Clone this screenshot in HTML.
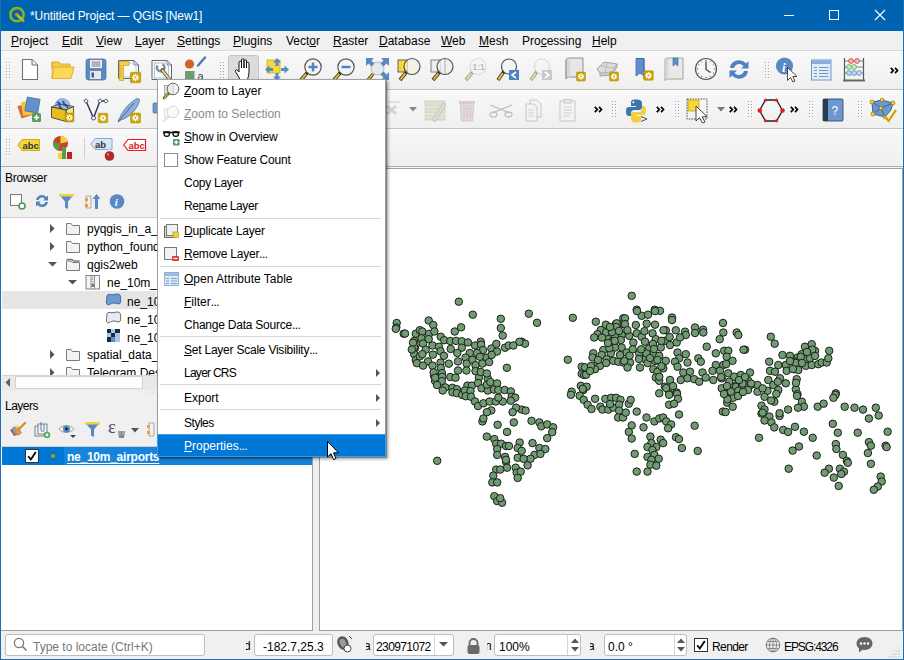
<!DOCTYPE html>
<html><head><meta charset="utf-8">
<style>
*{margin:0;padding:0;box-sizing:border-box}
html,body{width:904px;height:660px;overflow:hidden;background:#f0f0f0;font-family:"Liberation Sans",sans-serif;font-size:12px;color:#000}
.a{position:absolute}
svg{position:absolute;overflow:visible}
#title{left:0;top:0;width:904px;height:31px;background:#0063b1;color:#fff}
#menubar{left:1px;top:31px;width:902px;height:19px;background:#f0f0f0}
#menubar span{position:absolute;top:3px;font-size:12px}
.tb{left:1px;width:902px;background:linear-gradient(#f8f8f8,#efefef)}
.hline{height:1px;background:#c9c9c9}
.grip{position:absolute;width:3px;height:17px;background-image:radial-gradient(circle at 1px 1px,#b4b4b4 0.7px,transparent 0.9px);background-size:3px 3px}
.tx{position:absolute;white-space:nowrap}
u{text-decoration:underline;text-decoration-thickness:1px;text-underline-offset:0.8px}
.chev{position:absolute;font-weight:bold;font-size:13px;letter-spacing:-3px;transform:scaleY(0.9)}
.mi{position:absolute;left:184px;white-space:nowrap;font-size:12px}
.sep{position:absolute;left:160px;width:221px;height:1px;background:#d7d7d7}
.arr{position:absolute;left:376px;width:0;height:0;border-top:4px solid transparent;border-bottom:4px solid transparent;border-left:4px solid #555}
</style></head><body>

<!-- title bar -->
<div id="title" class="a">
  <svg style="left:8px;top:6px" width="20" height="20" viewBox="0 0 20 20">
    <circle cx="9" cy="8.6" r="6.6" fill="none" stroke="#8db21e" stroke-width="2.5"/>
    <line x1="9" y1="8.8" x2="15.2" y2="14.6" stroke="#8db21e" stroke-width="3" stroke-linecap="round"/>
    <line x1="9.5" y1="9.3" x2="14.5" y2="14" stroke="#a9cf4a" stroke-width="1.4" stroke-linecap="round"/>
    <circle cx="8.6" cy="8.4" r="1.6" fill="#f07a10"/>
  </svg>
  <div class="tx" style="left:30px;top:9px;font-size:12px;letter-spacing:-0.1px">*Untitled Project — QGIS [New1]</div>
  <div class="a" style="left:784px;top:15px;width:10px;height:1px;background:#fff"></div>
  <div class="a" style="left:829px;top:10px;width:10px;height:10px;border:1px solid #fff"></div>
  <svg style="left:875px;top:10px" width="10" height="10" viewBox="0 0 10 10"><path d="M0 0L10 10M10 0L0 10" stroke="#fff" stroke-width="1.1"/></svg>
</div>

<!-- menu bar -->
<div id="menubar" class="a">
  <span style="left:10px"><u>P</u>roject</span>
  <span style="left:61px"><u>E</u>dit</span>
  <span style="left:95px"><u>V</u>iew</span>
  <span style="left:134px"><u>L</u>ayer</span>
  <span style="left:176px"><u>S</u>ettings</span>
  <span style="left:232px"><u>P</u>lugins</span>
  <span style="left:285px">Vect<u>o</u>r</span>
  <span style="left:332px"><u>R</u>aster</span>
  <span style="left:378px"><u>D</u>atabase</span>
  <span style="left:440px"><u>W</u>eb</span>
  <span style="left:478px"><u>M</u>esh</span>
  <span style="left:521px">Pro<u>c</u>essing</span>
  <span style="left:591px"><u>H</u>elp</span>
</div>

<!-- toolbars -->
<div class="a hline" style="left:1px;top:50px;width:902px;background:#d8d8d8"></div>
<div class="a tb" style="top:51px;height:38px;border-top:1px solid #fcfcfc"></div>
<div class="a hline" style="left:1px;top:89px;width:902px;background:#c3c3c3"></div>
<div class="a tb" style="top:90px;height:38px;border-top:1px solid #fcfcfc"></div>
<div class="a hline" style="left:1px;top:128px;width:902px;background:#c3c3c3"></div>
<div class="a tb" style="top:129px;height:37px;border-top:1px solid #fcfcfc"></div>
<div class="a hline" style="left:1px;top:166px;width:902px;background:#ababab"></div>
<div class="a hline" style="left:1px;top:167px;width:902px;background:#f4f4f4"></div>

<!-- TOOLBAR ICONS -->
<svg style="left:6px;top:62px" width="6" height="18" viewBox="0 0 6 18" shape-rendering="crispEdges"><rect x="1" y="1" width="1" height="1" fill="#fff"/><rect x="0" y="0" width="1" height="1" fill="#a6a6a6"/><rect x="4" y="1" width="1" height="1" fill="#fff"/><rect x="3" y="0" width="1" height="1" fill="#a6a6a6"/><rect x="1" y="4" width="1" height="1" fill="#fff"/><rect x="0" y="3" width="1" height="1" fill="#a6a6a6"/><rect x="4" y="4" width="1" height="1" fill="#fff"/><rect x="3" y="3" width="1" height="1" fill="#a6a6a6"/><rect x="1" y="7" width="1" height="1" fill="#fff"/><rect x="0" y="6" width="1" height="1" fill="#a6a6a6"/><rect x="4" y="7" width="1" height="1" fill="#fff"/><rect x="3" y="6" width="1" height="1" fill="#a6a6a6"/><rect x="1" y="10" width="1" height="1" fill="#fff"/><rect x="0" y="9" width="1" height="1" fill="#a6a6a6"/><rect x="4" y="10" width="1" height="1" fill="#fff"/><rect x="3" y="9" width="1" height="1" fill="#a6a6a6"/><rect x="1" y="13" width="1" height="1" fill="#fff"/><rect x="0" y="12" width="1" height="1" fill="#a6a6a6"/><rect x="4" y="13" width="1" height="1" fill="#fff"/><rect x="3" y="12" width="1" height="1" fill="#a6a6a6"/><rect x="1" y="16" width="1" height="1" fill="#fff"/><rect x="0" y="15" width="1" height="1" fill="#a6a6a6"/><rect x="4" y="16" width="1" height="1" fill="#fff"/><rect x="3" y="15" width="1" height="1" fill="#a6a6a6"/></svg>
<svg style="left:21px;top:58px" width="18" height="23" viewBox="0 0 18 23" ><path d="M1.5 1.5H11L16.5 7V21.5H1.5Z" fill="#fff" stroke="#707070" stroke-width="1.1"/><path d="M11 1.5V7H16.5" fill="#eee" stroke="#707070" stroke-width="1"/></svg>
<svg style="left:51px;top:60px" width="24" height="20" viewBox="0 0 24 20" ><path d="M1 2H8L10 4H19V8H1Z" fill="#f1cc45" stroke="#d0a520" stroke-width="0.8"/><path d="M3 7H23L20 18.5H1Z" fill="#fdd853" stroke="#d0a520" stroke-width="0.8"/><path d="M1 2V18.5" stroke="#d0a520" stroke-width="0.8"/></svg>
<svg style="left:85px;top:58px" width="22" height="23" viewBox="0 0 22 23" ><rect x="1" y="1" width="20" height="21" rx="2.5" fill="#5b8ac2" stroke="#4a78b0" stroke-width="0.8"/><rect x="5" y="2" width="12" height="8" fill="#f4f4f4"/><path d="M6.5 4H15.5M6.5 6H15.5M6.5 8H15.5" stroke="#555" stroke-width="0.8"/><rect x="5" y="13" width="11" height="8" fill="#e8e8e8"/><rect x="6.5" y="14.5" width="2.5" height="5" fill="#3b5b8a"/></svg>
<svg style="left:117px;top:59px" width="25" height="24" viewBox="0 0 25 24" ><path d="M1.5 1.5H17L21.5 6V19.5H1.5Z" fill="#fafafa" stroke="#666" stroke-width="1"/><path d="M17 1.5V6H21.5" fill="none" stroke="#666" stroke-width="0.8"/><rect x="6" y="4" width="13" height="14" fill="none" stroke="#a6c4ee" stroke-width="0.8"/><path d="M2.5 2.5H12V6.5H6.5V21.5H2.5Z" fill="#f4cf45" stroke="#c9a21a" stroke-width="0.7"/><path d="M2.8 7H4.5M2.8 9.5H4.5M2.8 12H4.5M2.8 14.5H4.5M2.8 17H4.5" stroke="#b08a10" stroke-width="0.6"/><rect x="13.25" y="13.25" width="10.5" height="10.5" rx="1.2" fill="#c9a200" stroke="#b08d00" stroke-width="0.5"/><path d="M21.65 18.50L15.35 18.50M20.73 20.73L16.27 16.27M18.50 21.65L18.50 15.35M16.27 20.73L20.73 16.27" stroke="#fff" stroke-width="1.3" stroke-linecap="round"/><circle cx="18.5" cy="18.5" r="0.9" fill="#c9a200"/></svg>
<svg style="left:150px;top:59px" width="25" height="24" viewBox="0 0 25 24" ><path d="M2 1.5H17L21.5 6V20.5H2Z" fill="#fafafa" stroke="#666" stroke-width="1"/><path d="M17 1.5V6H21.5" fill="none" stroke="#666" stroke-width="0.8"/><rect x="4.5" y="4" width="14" height="15" fill="none" stroke="#a6c4ee" stroke-width="1"/><path d="M7.5 6.5A3.8 3.8 0 1 0 12.5 5.2" fill="none" stroke="#8a8a8a" stroke-width="2.4"/><path d="M8.8 5.5L10.5 7.5" stroke="#fafafa" stroke-width="1.6"/><line x1="12.2" y1="11" x2="20" y2="21" stroke="#444" stroke-width="3.6" stroke-linecap="round"/><line x1="12.4" y1="11.3" x2="19.8" y2="20.7" stroke="#efd57a" stroke-width="2" stroke-linecap="round"/></svg>
<svg style="left:183px;top:55px" width="24" height="27" viewBox="0 0 24 27" ><circle cx="6.5" cy="9" r="4.6" fill="#d1612a"/><line x1="15" y1="10.5" x2="22" y2="2.5" stroke="#4a78b8" stroke-width="2.4" stroke-linecap="round"/><rect x="2" y="16" width="9.5" height="9" fill="#6a9e6e"/><text x="14.5" y="25" font-family="Liberation Sans" font-size="11" fill="#444">a</text></svg>
<svg style="left:220px;top:62px" width="6" height="18" viewBox="0 0 6 18" shape-rendering="crispEdges"><rect x="1" y="1" width="1" height="1" fill="#fff"/><rect x="0" y="0" width="1" height="1" fill="#a6a6a6"/><rect x="4" y="1" width="1" height="1" fill="#fff"/><rect x="3" y="0" width="1" height="1" fill="#a6a6a6"/><rect x="1" y="4" width="1" height="1" fill="#fff"/><rect x="0" y="3" width="1" height="1" fill="#a6a6a6"/><rect x="4" y="4" width="1" height="1" fill="#fff"/><rect x="3" y="3" width="1" height="1" fill="#a6a6a6"/><rect x="1" y="7" width="1" height="1" fill="#fff"/><rect x="0" y="6" width="1" height="1" fill="#a6a6a6"/><rect x="4" y="7" width="1" height="1" fill="#fff"/><rect x="3" y="6" width="1" height="1" fill="#a6a6a6"/><rect x="1" y="10" width="1" height="1" fill="#fff"/><rect x="0" y="9" width="1" height="1" fill="#a6a6a6"/><rect x="4" y="10" width="1" height="1" fill="#fff"/><rect x="3" y="9" width="1" height="1" fill="#a6a6a6"/><rect x="1" y="13" width="1" height="1" fill="#fff"/><rect x="0" y="12" width="1" height="1" fill="#a6a6a6"/><rect x="4" y="13" width="1" height="1" fill="#fff"/><rect x="3" y="12" width="1" height="1" fill="#a6a6a6"/><rect x="1" y="16" width="1" height="1" fill="#fff"/><rect x="0" y="15" width="1" height="1" fill="#a6a6a6"/><rect x="4" y="16" width="1" height="1" fill="#fff"/><rect x="3" y="15" width="1" height="1" fill="#a6a6a6"/></svg>
<div class="a" style="left:228px;top:55px;width:31px;height:30px;background:#dcdcdc;border:1px solid #c4c4c4;border-radius:3px"></div>
<svg style="left:234px;top:57px" width="20" height="24" viewBox="0 0 20 24" ><path d="M5 13V5.5A1.25 1.25 0 0 1 7.5 5.5V11V3A1.25 1.25 0 0 1 10 3V11V4A1.25 1.25 0 0 1 12.5 4V11V6.5A1.25 1.25 0 0 1 15 6.5V15C15 18 14.2 20 13.5 22.5H6C5 20.5 3.5 18 1.6 14.8C0.9 13.4 2 12.2 3.2 13L5 15Z" fill="#fff" stroke="#111" stroke-width="1" stroke-linejoin="round"/></svg>
<svg style="left:265px;top:58px" width="24" height="23" viewBox="0 0 24 23" ><rect x="2" y="2" width="13" height="13" fill="#f7d83a" stroke="#d4ae10" stroke-width="0.8"/><g fill="#5a88c3"><path d="M12 0L16 4.5H13.5V8H10.5V4.5H8Z"/><path d="M12 23L16 18.5H13.5V15H10.5V18.5H8Z"/><path d="M0 11.5L4.5 7.5V10H8V13H4.5V15.5Z"/><path d="M24 11.5L19.5 7.5V10H16V13H19.5V15.5Z"/></g></svg>
<svg style="left:298px;top:57px" width="26" height="25" viewBox="0 0 26 25" ><g opacity="1"><line x1="3" y1="23" x2="9.096" y2="15.904" stroke="#3a3a3a" stroke-width="3.6" stroke-linecap="butt"/><line x1="3.5" y1="22.5" x2="8.796" y2="16.204" stroke="#f2c41a" stroke-width="1.9"/><circle cx="9.296" cy="15.704" r="1.7" fill="#111"/><circle cx="15" cy="10" r="8.2" fill="#f4f4f4" stroke="#555" stroke-width="1.2"/></g><path d="M15 5.5V14.5M10.5 10H19.5" stroke="#4f82c0" stroke-width="2.4"/></svg>
<svg style="left:331px;top:57px" width="26" height="25" viewBox="0 0 26 25" ><g opacity="1"><line x1="3" y1="23" x2="9.096" y2="15.904" stroke="#3a3a3a" stroke-width="3.6" stroke-linecap="butt"/><line x1="3.5" y1="22.5" x2="8.796" y2="16.204" stroke="#f2c41a" stroke-width="1.9"/><circle cx="9.296" cy="15.704" r="1.7" fill="#111"/><circle cx="15" cy="10" r="8.2" fill="#f4f4f4" stroke="#555" stroke-width="1.2"/></g><path d="M10.5 10H19.5" stroke="#4f82c0" stroke-width="2.4"/></svg>
<svg style="left:365px;top:57px" width="25" height="25" viewBox="0 0 25 25" ><circle cx="12.5" cy="11.5" r="6.5" fill="#e8e8e8" stroke="#aaa" stroke-width="0.8"/><line x1="3" y1="23" x2="8" y2="17" stroke="#222" stroke-width="3"/><line x1="3" y1="23" x2="7.7" y2="17.3" stroke="#f2c41a" stroke-width="1.6"/><g fill="#5a88c3"><path d="M1 1H9L6.5 3.5L9.5 6.5L6.5 9.5L3.5 6.5L1 9Z"/><path d="M24 1H16L18.5 3.5L15.5 6.5L18.5 9.5L21.5 6.5L24 9Z"/><path d="M24 23H16L18.5 20.5L15.5 17.5L18.5 14.5L21.5 17.5L24 15Z"/></g></svg>
<svg style="left:397px;top:57px" width="26" height="25" viewBox="0 0 26 25" ><rect x="1" y="3" width="9.5" height="12" fill="#f7d83a" stroke="#444" stroke-width="0.8"/><g opacity="1"><line x1="3" y1="23" x2="9.24" y2="15.26" stroke="#3a3a3a" stroke-width="3.6" stroke-linecap="butt"/><line x1="3.5" y1="22.5" x2="8.94" y2="15.56" stroke="#f2c41a" stroke-width="1.9"/><circle cx="9.44" cy="15.06" r="1.7" fill="#111"/><circle cx="15" cy="9.5" r="8" fill="rgba(245,240,220,0.75)" stroke="#555" stroke-width="1.2"/></g></svg>
<svg style="left:430px;top:57px" width="26" height="25" viewBox="0 0 26 25" ><rect x="1" y="3" width="9.5" height="12" fill="#eee" stroke="#666" stroke-width="0.8"/><g opacity="1"><line x1="3" y1="23" x2="9.24" y2="15.26" stroke="#3a3a3a" stroke-width="3.6" stroke-linecap="butt"/><line x1="3.5" y1="22.5" x2="8.94" y2="15.56" stroke="#f2c41a" stroke-width="1.9"/><circle cx="9.44" cy="15.06" r="1.7" fill="#111"/><circle cx="15" cy="9.5" r="8" fill="rgba(240,240,240,0.8)" stroke="#555" stroke-width="1.2"/></g><line x1="15" y1="2" x2="15" y2="17" stroke="#999" stroke-width="0.8"/></svg>
<svg style="left:463px;top:57px" width="26" height="25" viewBox="0 0 26 25" ><g opacity="0.45"><line x1="3" y1="23" x2="9.24" y2="15.26" stroke="#3a3a3a" stroke-width="3.6" stroke-linecap="butt"/><line x1="3.5" y1="22.5" x2="8.94" y2="15.56" stroke="#f2c41a" stroke-width="1.9"/><circle cx="9.44" cy="15.06" r="1.7" fill="#111"/><circle cx="15" cy="9.5" r="8" fill="#f6f6f6" stroke="#bbb" stroke-width="1.2"/></g><text x="9.5" y="13" font-family="Liberation Sans" font-size="8.5" font-weight="bold" fill="#bbb">1:1</text></svg>
<svg style="left:495px;top:57px" width="26" height="25" viewBox="0 0 26 25" ><g opacity="1"><line x1="3" y1="23" x2="8.600000000000001" y2="14.899999999999999" stroke="#3a3a3a" stroke-width="3.6" stroke-linecap="butt"/><line x1="3.5" y1="22.5" x2="8.3" y2="15.2" stroke="#f2c41a" stroke-width="1.9"/><circle cx="8.8" cy="14.7" r="1.7" fill="#111"/><circle cx="14" cy="9.5" r="7.5" fill="#f4f4f4" stroke="#555" stroke-width="1.2"/></g><rect x="14" y="13" width="10" height="10" fill="#4f82c0"/><path d="M21 15L17 18L21 21" fill="none" stroke="#fff" stroke-width="1.6"/></svg>
<svg style="left:528px;top:57px" width="26" height="25" viewBox="0 0 26 25" ><g opacity="0.45"><line x1="3" y1="23" x2="8.600000000000001" y2="14.899999999999999" stroke="#3a3a3a" stroke-width="3.6" stroke-linecap="butt"/><line x1="3.5" y1="22.5" x2="8.3" y2="15.2" stroke="#f2c41a" stroke-width="1.9"/><circle cx="8.8" cy="14.7" r="1.7" fill="#111"/><circle cx="14" cy="9.5" r="7.5" fill="#f6f6f6" stroke="#bbb" stroke-width="1.2"/></g><rect x="14" y="13" width="10" height="10" fill="#c9c9c9"/><path d="M17 15L21 18L17 21" fill="none" stroke="#fff" stroke-width="1.6"/></svg>
<svg style="left:562px;top:57px" width="26" height="25" viewBox="0 0 26 25" ><path d="M4 3C4 1.5 6 1 7 1H21V20H7C5.5 20 4 21 4 22Z" fill="#e6e6e6" stroke="#888" stroke-width="0.9"/><path d="M4 3V22" stroke="#999" stroke-width="0.9"/><rect x="5" y="3" width="3" height="17" fill="#d6d6d6"/><rect x="14.5" y="15.0" width="9" height="9" rx="1.2" fill="#c9a200" stroke="#b08d00" stroke-width="0.5"/><path d="M21.70 19.50L16.30 19.50M20.91 21.41L17.09 17.59M19.00 22.20L19.00 16.80M17.09 21.41L20.91 17.59" stroke="#fff" stroke-width="1.3" stroke-linecap="round"/><circle cx="19" cy="19.5" r="0.9" fill="#c9a200"/></svg>
<svg style="left:595px;top:57px" width="26" height="25" viewBox="0 0 26 25" ><path d="M2 12L9 5L22 7L17 15L5 16Z" fill="#dcdcdc" stroke="#999" stroke-width="0.9"/><path d="M5 16V19L17 18V15M17 18L22 10V7" fill="#c8c8c8" stroke="#999" stroke-width="0.8"/><path d="M6 9L19 11M12 6L10 15" stroke="#aaa" stroke-width="0.6"/><rect x="14.5" y="15.0" width="9" height="9" rx="1.2" fill="#c9a200" stroke="#b08d00" stroke-width="0.5"/><path d="M21.70 19.50L16.30 19.50M20.91 21.41L17.09 17.59M19.00 22.20L19.00 16.80M17.09 21.41L20.91 17.59" stroke="#fff" stroke-width="1.3" stroke-linecap="round"/><circle cx="19" cy="19.5" r="0.9" fill="#c9a200"/></svg>
<svg style="left:634px;top:57px" width="22" height="26" viewBox="0 0 22 26" ><path d="M2 1.5H10V19L6 16L2 19Z" fill="#5f8fca" stroke="#3f6aa3" stroke-width="0.8" transform="translate(0,0)"/><path d="M2 1.5H10V22" fill="none" stroke="#3f6aa3"/><rect x="9.75" y="13.75" width="9.5" height="9.5" rx="1.2" fill="#c9a200" stroke="#b08d00" stroke-width="0.5"/><path d="M17.35 18.50L11.65 18.50M16.52 20.52L12.48 16.48M14.50 21.35L14.50 15.65M12.48 20.52L16.52 16.48" stroke="#fff" stroke-width="1.3" stroke-linecap="round"/><circle cx="14.5" cy="18.5" r="0.9" fill="#c9a200"/></svg>
<svg style="left:662px;top:57px" width="23" height="25" viewBox="0 0 23 25" ><path d="M3 3C3 1.5 4.5 1 5.5 1H21V22H5.5C4.5 22 3 22.5 3 23.5Z" fill="#e9e9e9" stroke="#999" stroke-width="0.9"/><rect x="3.5" y="2" width="3" height="20" fill="#d8d8d8"/><path d="M11 1H16V9L13.5 7L11 9Z" fill="#5f8fca" stroke="#3f6aa3" stroke-width="0.6"/></svg>
<svg style="left:694px;top:57px" width="24" height="25" viewBox="0 0 24 25" ><circle cx="12" cy="12" r="10.5" fill="#f6f6f6" stroke="#555" stroke-width="1.2"/><path d="M12 4.5V12.5L16.5 15.5" fill="none" stroke="#444" stroke-width="1.3"/><g fill="#4f82c0"><circle cx="12" cy="3.5" r="0.8"/><circle cx="12" cy="20.5" r="0.8"/><circle cx="3.5" cy="12" r="0.8"/><circle cx="20.5" cy="12" r="0.8"/><circle cx="7.8" cy="4.6" r="0.6"/><circle cx="16.2" cy="4.6" r="0.6"/><circle cx="4.6" cy="7.8" r="0.6"/><circle cx="19.4" cy="7.8" r="0.6"/><circle cx="4.6" cy="16.2" r="0.6"/><circle cx="19.4" cy="16.2" r="0.6"/><circle cx="7.8" cy="19.4" r="0.6"/><circle cx="16.2" cy="19.4" r="0.6"/></g></svg>
<svg style="left:727px;top:58px" width="24" height="23" viewBox="0 0 24 23" ><path d="M3 10C3.5 5 8 2 12.5 2.3C15.5 2.5 17.5 4 19 5.5L21.5 3V10.5H14L16.5 8C15.5 7 14 6 12.3 6C9.5 6 7.5 8 7 10Z" fill="#4f82c0"/><path d="M21 13C20.5 18 16 21 11.5 20.7C8.5 20.5 6.5 19 5 17.5L2.5 20V12.5H10L7.5 15C8.5 16 10 17 11.7 17C14.5 17 16.5 15 17 13Z" fill="#4f82c0"/></svg>
<svg style="left:765px;top:62px" width="6" height="18" viewBox="0 0 6 18" shape-rendering="crispEdges"><rect x="1" y="1" width="1" height="1" fill="#fff"/><rect x="0" y="0" width="1" height="1" fill="#a6a6a6"/><rect x="4" y="1" width="1" height="1" fill="#fff"/><rect x="3" y="0" width="1" height="1" fill="#a6a6a6"/><rect x="1" y="4" width="1" height="1" fill="#fff"/><rect x="0" y="3" width="1" height="1" fill="#a6a6a6"/><rect x="4" y="4" width="1" height="1" fill="#fff"/><rect x="3" y="3" width="1" height="1" fill="#a6a6a6"/><rect x="1" y="7" width="1" height="1" fill="#fff"/><rect x="0" y="6" width="1" height="1" fill="#a6a6a6"/><rect x="4" y="7" width="1" height="1" fill="#fff"/><rect x="3" y="6" width="1" height="1" fill="#a6a6a6"/><rect x="1" y="10" width="1" height="1" fill="#fff"/><rect x="0" y="9" width="1" height="1" fill="#a6a6a6"/><rect x="4" y="10" width="1" height="1" fill="#fff"/><rect x="3" y="9" width="1" height="1" fill="#a6a6a6"/><rect x="1" y="13" width="1" height="1" fill="#fff"/><rect x="0" y="12" width="1" height="1" fill="#a6a6a6"/><rect x="4" y="13" width="1" height="1" fill="#fff"/><rect x="3" y="12" width="1" height="1" fill="#a6a6a6"/><rect x="1" y="16" width="1" height="1" fill="#fff"/><rect x="0" y="15" width="1" height="1" fill="#a6a6a6"/><rect x="4" y="16" width="1" height="1" fill="#fff"/><rect x="3" y="15" width="1" height="1" fill="#a6a6a6"/></svg>
<svg style="left:775px;top:56px" width="27" height="27" viewBox="0 0 27 27" ><circle cx="9.5" cy="10" r="8.6" fill="#5a8ac6"/><text x="7" y="15.5" font-family="Liberation Serif" font-style="italic" font-weight="bold" font-size="13" fill="#fff">i</text><path d="M12.5 11.5V24.5L15.5 21.5L18 26L20 25L17.8 20.5H22Z" fill="#fff" stroke="#333" stroke-width="0.9" stroke-linejoin="round"/></svg>
<svg style="left:810px;top:58px" width="23" height="24" viewBox="0 0 23 24" ><rect x="1.5" y="2" width="19.5" height="20" fill="#e3ecf7" stroke="#6b98d0" stroke-width="1"/><rect x="2" y="2.5" width="18.5" height="3.5" fill="#89acdb"/><path d="M4 9.5H7M9 9.5H18.5M4 12.5H7M9 12.5H18.5M4 15.5H7M9 15.5H18.5M4 18.5H7M9 18.5H18.5" stroke="#6b98d0" stroke-width="1.1"/></svg>
<svg style="left:842px;top:57px" width="24" height="26" viewBox="0 0 24 26" ><path d="M2.5 1V23M21.5 1V23" stroke="#555" stroke-width="1.2"/><path d="M1 23.5H23" stroke="#666" stroke-width="2"/><path d="M2.5 4H21.5M2.5 10H21.5M2.5 16H21.5" stroke="#666" stroke-width="0.8"/><g stroke-width="0.8"><circle cx="9" cy="4" r="2.4" fill="#f5b7b7" stroke="#d23b3b"/><circle cx="15" cy="4" r="2.4" fill="#f5b7b7" stroke="#d23b3b"/><circle cx="7" cy="10" r="2.4" fill="#c8ebc4" stroke="#55a84f"/><circle cx="12" cy="10" r="2.4" fill="#c8ebc4" stroke="#55a84f"/><circle cx="7" cy="16" r="2.4" fill="#c5daf2" stroke="#5b8ac6"/><circle cx="12" cy="16" r="2.4" fill="#c5daf2" stroke="#5b8ac6"/><circle cx="17" cy="16" r="2.4" fill="#c5daf2" stroke="#5b8ac6"/></g></svg>
<svg style="left:890px;top:67px" width="9" height="7" viewBox="0 0 9 7"><path d="M0.8 0.8L3.3 3.5L0.8 6.2M5 0.8L7.5 3.5L5 6.2" fill="none" stroke="#000" stroke-width="1.7"/></svg>
<svg style="left:6px;top:101px" width="6" height="18" viewBox="0 0 6 18" shape-rendering="crispEdges"><rect x="1" y="1" width="1" height="1" fill="#fff"/><rect x="0" y="0" width="1" height="1" fill="#a6a6a6"/><rect x="4" y="1" width="1" height="1" fill="#fff"/><rect x="3" y="0" width="1" height="1" fill="#a6a6a6"/><rect x="1" y="4" width="1" height="1" fill="#fff"/><rect x="0" y="3" width="1" height="1" fill="#a6a6a6"/><rect x="4" y="4" width="1" height="1" fill="#fff"/><rect x="3" y="3" width="1" height="1" fill="#a6a6a6"/><rect x="1" y="7" width="1" height="1" fill="#fff"/><rect x="0" y="6" width="1" height="1" fill="#a6a6a6"/><rect x="4" y="7" width="1" height="1" fill="#fff"/><rect x="3" y="6" width="1" height="1" fill="#a6a6a6"/><rect x="1" y="10" width="1" height="1" fill="#fff"/><rect x="0" y="9" width="1" height="1" fill="#a6a6a6"/><rect x="4" y="10" width="1" height="1" fill="#fff"/><rect x="3" y="9" width="1" height="1" fill="#a6a6a6"/><rect x="1" y="13" width="1" height="1" fill="#fff"/><rect x="0" y="12" width="1" height="1" fill="#a6a6a6"/><rect x="4" y="13" width="1" height="1" fill="#fff"/><rect x="3" y="12" width="1" height="1" fill="#a6a6a6"/><rect x="1" y="16" width="1" height="1" fill="#fff"/><rect x="0" y="15" width="1" height="1" fill="#a6a6a6"/><rect x="4" y="16" width="1" height="1" fill="#fff"/><rect x="3" y="15" width="1" height="1" fill="#a6a6a6"/></svg>
<svg style="left:17px;top:97px" width="26" height="27" viewBox="0 0 26 27" ><rect x="2" y="7" width="13" height="13" fill="#d86d3a" transform="rotate(-18 8 13)"/><rect x="5" y="4" width="13" height="14" fill="#f0c83a" transform="rotate(-8 11 11)"/><rect x="9" y="1" width="13" height="14" fill="#6491c8" stroke="#3d6aa2" stroke-width="0.7" transform="rotate(10 15 8)"/><rect x="15" y="16" width="9" height="9" rx="1.5" fill="#5a9a5e"/><path d="M19.5 17.8V23.2M16.8 20.5H22.2" stroke="#fff" stroke-width="1.6"/></svg>
<svg style="left:50px;top:97px" width="26" height="27" viewBox="0 0 26 27" ><circle cx="12.5" cy="9" r="7.5" fill="#9dbbe3" stroke="#6e8fbf" stroke-width="0.6"/><path d="M7 5.5C9 5 10.5 6.5 9.5 8.5C9 10 10.5 11 12 10.5M13 4C14 5.5 13 7 15 8C17 8 18 9.5 17 11M11 13C13 12.5 15 13 16 14" fill="none" stroke="#2f5590" stroke-width="2"/><path d="M1.5 10L16 13L23.5 9.5L9 7Z" fill="none" stroke="#333" stroke-width="0.8"/><path d="M16 13L23.5 9.5V20.5L16 24.5Z" fill="#f6e680" stroke="#333" stroke-width="0.8"/><path d="M1.5 10L16 13V24.5L1.5 20.5Z" fill="#e6bf1e" stroke="#333" stroke-width="0.8"/><rect x="15.0" y="16.0" width="9" height="9" rx="1.2" fill="#c9a200" stroke="#b08d00" stroke-width="0.5"/><path d="M22.20 20.50L16.80 20.50M21.41 22.41L17.59 18.59M19.50 23.20L19.50 17.80M17.59 22.41L21.41 18.59" stroke="#fff" stroke-width="1.3" stroke-linecap="round"/><circle cx="19.5" cy="20.5" r="0.9" fill="#c9a200"/></svg>
<svg style="left:83px;top:97px" width="26" height="27" viewBox="0 0 26 27" ><path d="M3 4L10.5 21L17 4L23 4" fill="none" stroke="#2f3f58" stroke-width="1.5"/><g fill="#fff" stroke="#2f3f58" stroke-width="0.9"><path d="M3 1.8L5.2 4L3 6.2L0.8 4Z"/><path d="M17 1.8L19.2 4L17 6.2L14.8 4Z"/><path d="M23 1.8L25.2 4L23 6.2L20.8 4Z"/><circle cx="10.5" cy="21" r="2"/></g><rect x="15.25" y="16.25" width="9.5" height="9.5" rx="1.2" fill="#c9a200" stroke="#b08d00" stroke-width="0.5"/><path d="M22.85 21.00L17.15 21.00M22.02 23.02L17.98 18.98M20.00 23.85L20.00 18.15M17.98 23.02L22.02 18.98" stroke="#fff" stroke-width="1.3" stroke-linecap="round"/><circle cx="20" cy="21" r="0.9" fill="#c9a200"/></svg>
<svg style="left:116px;top:97px" width="26" height="27" viewBox="0 0 26 27" ><path d="M2 25C5 17 10 8 20 2C23 1 24 2 23 5C21 12 14 20 5 23Z" fill="#8fb0dc" stroke="#4a70a8" stroke-width="0.8"/><path d="M2 25L18 6" stroke="#3a5a90" stroke-width="0.9"/><rect x="14.5" y="16.0" width="10" height="10" rx="1.2" fill="#c9a200" stroke="#b08d00" stroke-width="0.5"/><path d="M22.50 21.00L16.50 21.00M21.62 23.12L17.38 18.88M19.50 24.00L19.50 18.00M17.38 23.12L21.62 18.88" stroke="#fff" stroke-width="1.3" stroke-linecap="round"/><circle cx="19.5" cy="21" r="0.9" fill="#c9a200"/></svg>
<svg style="left:152px;top:101px" width="6" height="14" viewBox="0 0 6 14" ><rect x="1" y="2" width="5" height="10" rx="1" fill="#6b98d0" stroke="#3a5a8a" stroke-width="0.6"/></svg>
<svg style="left:386px;top:98px" width="16" height="24" viewBox="0 0 16 24" opacity="0.9"><path d="M1 8L10 16M10 8L1 16" stroke="#cfcfcf" stroke-width="3"/><path d="M2 4H14" stroke="#d8d8d8" stroke-width="1.5"/></svg>
<svg style="left:409px;top:107px" width="8" height="5" viewBox="0 0 8 5"><path d="M0 0H8L4 4.5Z" fill="#888"/></svg>
<svg style="left:424px;top:98px" width="23" height="25" viewBox="0 0 23 25" ><g fill="#e0e0d0" stroke="#c8c8b8" stroke-width="0.7"><rect x="1" y="3" width="20" height="5"/><rect x="1" y="10" width="20" height="5"/><rect x="1" y="17" width="20" height="5"/></g><path d="M8 22L19 5L22 7L11 24Z" fill="#dcdccc" stroke="#bbb" stroke-width="0.7"/></svg>
<svg style="left:457px;top:98px" width="21" height="25" viewBox="0 0 21 25" ><g opacity="0.55"><rect x="2" y="3" width="16" height="3" fill="#bfaaaa"/><path d="M3 7H17L15.5 23H4.5Z" fill="#d8c4c4" stroke="#b09a9a" stroke-width="0.8"/><path d="M7 9V21M10 9V21M13 9V21" stroke="#b09a9a" stroke-width="0.8"/></g></svg>
<svg style="left:489px;top:99px" width="25" height="22" viewBox="0 0 25 22" ><g opacity="0.5" fill="none" stroke="#888" stroke-width="1.2"><ellipse cx="4.5" cy="15.5" rx="3.5" ry="2.5"/><ellipse cx="19.5" cy="15.5" rx="3.5" ry="2.5"/><path d="M1 6L21 14M23 6L3 14"/></g></svg>
<svg style="left:524px;top:98px" width="19" height="25" viewBox="0 0 19 25" ><g opacity="0.45" fill="#f4f4f4" stroke="#888" stroke-width="0.9"><path d="M6 2H13L17 6V19H6Z"/><path d="M2 6H10L13 9V23H2Z"/><path d="M4 12H10M4 15H10M4 18H10" stroke-width="0.7"/></g></svg>
<svg style="left:558px;top:98px" width="19" height="25" viewBox="0 0 19 25" ><g opacity="0.45" fill="#f4f4f4" stroke="#888" stroke-width="0.9"><rect x="2" y="3" width="15" height="20"/><rect x="6" y="1.5" width="7" height="3.5" fill="#ddd"/><path d="M5 9H14M5 12H14M5 15H14M5 18H12" stroke-width="0.7"/></g></svg>
<svg style="left:594px;top:106px" width="9" height="7" viewBox="0 0 9 7"><path d="M0.8 0.8L3.3 3.5L0.8 6.2M5 0.8L7.5 3.5L5 6.2" fill="none" stroke="#000" stroke-width="1.7"/></svg>
<svg style="left:612px;top:101px" width="6" height="18" viewBox="0 0 6 18" shape-rendering="crispEdges"><rect x="1" y="1" width="1" height="1" fill="#fff"/><rect x="0" y="0" width="1" height="1" fill="#a6a6a6"/><rect x="4" y="1" width="1" height="1" fill="#fff"/><rect x="3" y="0" width="1" height="1" fill="#a6a6a6"/><rect x="1" y="4" width="1" height="1" fill="#fff"/><rect x="0" y="3" width="1" height="1" fill="#a6a6a6"/><rect x="4" y="4" width="1" height="1" fill="#fff"/><rect x="3" y="3" width="1" height="1" fill="#a6a6a6"/><rect x="1" y="7" width="1" height="1" fill="#fff"/><rect x="0" y="6" width="1" height="1" fill="#a6a6a6"/><rect x="4" y="7" width="1" height="1" fill="#fff"/><rect x="3" y="6" width="1" height="1" fill="#a6a6a6"/><rect x="1" y="10" width="1" height="1" fill="#fff"/><rect x="0" y="9" width="1" height="1" fill="#a6a6a6"/><rect x="4" y="10" width="1" height="1" fill="#fff"/><rect x="3" y="9" width="1" height="1" fill="#a6a6a6"/><rect x="1" y="13" width="1" height="1" fill="#fff"/><rect x="0" y="12" width="1" height="1" fill="#a6a6a6"/><rect x="4" y="13" width="1" height="1" fill="#fff"/><rect x="3" y="12" width="1" height="1" fill="#a6a6a6"/><rect x="1" y="16" width="1" height="1" fill="#fff"/><rect x="0" y="15" width="1" height="1" fill="#a6a6a6"/><rect x="4" y="16" width="1" height="1" fill="#fff"/><rect x="3" y="15" width="1" height="1" fill="#a6a6a6"/></svg>
<svg style="left:625px;top:98px" width="23" height="25" viewBox="0 0 23 25" ><path d="M10.5 1.5C6 1.5 6 3.5 6 5V8H11V9H4C1.5 9 1 11 1 13.5C1 16 1.5 18 4 18H6V15C6 13 7.5 12 9.5 12H14C15.5 12 17 11 17 9.5V5C17 3 15.5 1.5 10.5 1.5Z" fill="#3b77a8"/><circle cx="8.3" cy="4.2" r="1" fill="#fff"/><path d="M11.5 24.5C16 24.5 16 22.5 16 21V18H11V17H18C20.5 17 21 15 21 12.5C21 10 20.5 8 18 8H17V11C17 13 15.5 14 13.5 14H8C6.5 14 6 15 6 16.5V21C6 23 7.5 24.5 11.5 24.5Z" fill="#f5cd3f"/><path d="M16 18.5L22 21L16 23.5" fill="none" stroke="#555" stroke-width="1"/></svg>
<svg style="left:656px;top:106px" width="9" height="7" viewBox="0 0 9 7"><path d="M0.8 0.8L3.3 3.5L0.8 6.2M5 0.8L7.5 3.5L5 6.2" fill="none" stroke="#000" stroke-width="1.7"/></svg>
<svg style="left:675px;top:101px" width="6" height="18" viewBox="0 0 6 18" shape-rendering="crispEdges"><rect x="1" y="1" width="1" height="1" fill="#fff"/><rect x="0" y="0" width="1" height="1" fill="#a6a6a6"/><rect x="4" y="1" width="1" height="1" fill="#fff"/><rect x="3" y="0" width="1" height="1" fill="#a6a6a6"/><rect x="1" y="4" width="1" height="1" fill="#fff"/><rect x="0" y="3" width="1" height="1" fill="#a6a6a6"/><rect x="4" y="4" width="1" height="1" fill="#fff"/><rect x="3" y="3" width="1" height="1" fill="#a6a6a6"/><rect x="1" y="7" width="1" height="1" fill="#fff"/><rect x="0" y="6" width="1" height="1" fill="#a6a6a6"/><rect x="4" y="7" width="1" height="1" fill="#fff"/><rect x="3" y="6" width="1" height="1" fill="#a6a6a6"/><rect x="1" y="10" width="1" height="1" fill="#fff"/><rect x="0" y="9" width="1" height="1" fill="#a6a6a6"/><rect x="4" y="10" width="1" height="1" fill="#fff"/><rect x="3" y="9" width="1" height="1" fill="#a6a6a6"/><rect x="1" y="13" width="1" height="1" fill="#fff"/><rect x="0" y="12" width="1" height="1" fill="#a6a6a6"/><rect x="4" y="13" width="1" height="1" fill="#fff"/><rect x="3" y="12" width="1" height="1" fill="#a6a6a6"/><rect x="1" y="16" width="1" height="1" fill="#fff"/><rect x="0" y="15" width="1" height="1" fill="#a6a6a6"/><rect x="4" y="16" width="1" height="1" fill="#fff"/><rect x="3" y="15" width="1" height="1" fill="#a6a6a6"/></svg>
<svg style="left:686px;top:98px" width="26" height="27" viewBox="0 0 26 27" ><rect x="1" y="1" width="20" height="20" fill="none" stroke="#333" stroke-width="0.9" stroke-dasharray="1.5 1.2"/><rect x="2" y="2" width="11" height="11" fill="#f6d736" stroke="#a88f10" stroke-width="0.6"/><path d="M10 8V23L13.5 19.5L16.5 25L19 24L16.2 18.7H21Z" fill="#fff" stroke="#333" stroke-width="0.9" stroke-linejoin="round"/></svg>
<svg style="left:717px;top:107px" width="8" height="5" viewBox="0 0 8 5"><path d="M0 0H8L4 4.5Z" fill="#777"/></svg>
<svg style="left:729px;top:106px" width="9" height="7" viewBox="0 0 9 7"><path d="M0.8 0.8L3.3 3.5L0.8 6.2M5 0.8L7.5 3.5L5 6.2" fill="none" stroke="#000" stroke-width="1.7"/></svg>
<svg style="left:748px;top:101px" width="6" height="18" viewBox="0 0 6 18" shape-rendering="crispEdges"><rect x="1" y="1" width="1" height="1" fill="#fff"/><rect x="0" y="0" width="1" height="1" fill="#a6a6a6"/><rect x="4" y="1" width="1" height="1" fill="#fff"/><rect x="3" y="0" width="1" height="1" fill="#a6a6a6"/><rect x="1" y="4" width="1" height="1" fill="#fff"/><rect x="0" y="3" width="1" height="1" fill="#a6a6a6"/><rect x="4" y="4" width="1" height="1" fill="#fff"/><rect x="3" y="3" width="1" height="1" fill="#a6a6a6"/><rect x="1" y="7" width="1" height="1" fill="#fff"/><rect x="0" y="6" width="1" height="1" fill="#a6a6a6"/><rect x="4" y="7" width="1" height="1" fill="#fff"/><rect x="3" y="6" width="1" height="1" fill="#a6a6a6"/><rect x="1" y="10" width="1" height="1" fill="#fff"/><rect x="0" y="9" width="1" height="1" fill="#a6a6a6"/><rect x="4" y="10" width="1" height="1" fill="#fff"/><rect x="3" y="9" width="1" height="1" fill="#a6a6a6"/><rect x="1" y="13" width="1" height="1" fill="#fff"/><rect x="0" y="12" width="1" height="1" fill="#a6a6a6"/><rect x="4" y="13" width="1" height="1" fill="#fff"/><rect x="3" y="12" width="1" height="1" fill="#a6a6a6"/><rect x="1" y="16" width="1" height="1" fill="#fff"/><rect x="0" y="15" width="1" height="1" fill="#a6a6a6"/><rect x="4" y="16" width="1" height="1" fill="#fff"/><rect x="3" y="15" width="1" height="1" fill="#a6a6a6"/></svg>
<svg style="left:758px;top:98px" width="27" height="25" viewBox="0 0 27 25" ><path d="M7.5 2H18.5L24.5 12.5L18.5 23H7.5L1.5 12.5Z" fill="none" stroke="#222" stroke-width="1.3"/><g fill="#e02020"><circle cx="7.5" cy="2.2" r="1.6"/><circle cx="18.5" cy="2.2" r="1.6"/><circle cx="24.5" cy="12.5" r="2.3"/><circle cx="1.8" cy="12.5" r="2.3"/><circle cx="18.5" cy="22.8" r="1.6"/><circle cx="7.5" cy="22.8" r="1.6"/></g></svg>
<svg style="left:790px;top:106px" width="9" height="7" viewBox="0 0 9 7"><path d="M0.8 0.8L3.3 3.5L0.8 6.2M5 0.8L7.5 3.5L5 6.2" fill="none" stroke="#000" stroke-width="1.7"/></svg>
<svg style="left:809px;top:101px" width="6" height="18" viewBox="0 0 6 18" shape-rendering="crispEdges"><rect x="1" y="1" width="1" height="1" fill="#fff"/><rect x="0" y="0" width="1" height="1" fill="#a6a6a6"/><rect x="4" y="1" width="1" height="1" fill="#fff"/><rect x="3" y="0" width="1" height="1" fill="#a6a6a6"/><rect x="1" y="4" width="1" height="1" fill="#fff"/><rect x="0" y="3" width="1" height="1" fill="#a6a6a6"/><rect x="4" y="4" width="1" height="1" fill="#fff"/><rect x="3" y="3" width="1" height="1" fill="#a6a6a6"/><rect x="1" y="7" width="1" height="1" fill="#fff"/><rect x="0" y="6" width="1" height="1" fill="#a6a6a6"/><rect x="4" y="7" width="1" height="1" fill="#fff"/><rect x="3" y="6" width="1" height="1" fill="#a6a6a6"/><rect x="1" y="10" width="1" height="1" fill="#fff"/><rect x="0" y="9" width="1" height="1" fill="#a6a6a6"/><rect x="4" y="10" width="1" height="1" fill="#fff"/><rect x="3" y="9" width="1" height="1" fill="#a6a6a6"/><rect x="1" y="13" width="1" height="1" fill="#fff"/><rect x="0" y="12" width="1" height="1" fill="#a6a6a6"/><rect x="4" y="13" width="1" height="1" fill="#fff"/><rect x="3" y="12" width="1" height="1" fill="#a6a6a6"/><rect x="1" y="16" width="1" height="1" fill="#fff"/><rect x="0" y="15" width="1" height="1" fill="#a6a6a6"/><rect x="4" y="16" width="1" height="1" fill="#fff"/><rect x="3" y="15" width="1" height="1" fill="#a6a6a6"/></svg>
<svg style="left:822px;top:98px" width="23" height="25" viewBox="0 0 23 25" ><rect x="1" y="1" width="20" height="22" rx="1" fill="#6b98d0" stroke="#2a3a50" stroke-width="0.8"/><rect x="1" y="1" width="5" height="22" fill="#2a3a50"/><text x="9.5" y="16.5" font-family="Liberation Sans" font-size="12" fill="#fff">?</text></svg>
<svg style="left:858px;top:101px" width="6" height="18" viewBox="0 0 6 18" shape-rendering="crispEdges"><rect x="1" y="1" width="1" height="1" fill="#fff"/><rect x="0" y="0" width="1" height="1" fill="#a6a6a6"/><rect x="4" y="1" width="1" height="1" fill="#fff"/><rect x="3" y="0" width="1" height="1" fill="#a6a6a6"/><rect x="1" y="4" width="1" height="1" fill="#fff"/><rect x="0" y="3" width="1" height="1" fill="#a6a6a6"/><rect x="4" y="4" width="1" height="1" fill="#fff"/><rect x="3" y="3" width="1" height="1" fill="#a6a6a6"/><rect x="1" y="7" width="1" height="1" fill="#fff"/><rect x="0" y="6" width="1" height="1" fill="#a6a6a6"/><rect x="4" y="7" width="1" height="1" fill="#fff"/><rect x="3" y="6" width="1" height="1" fill="#a6a6a6"/><rect x="1" y="10" width="1" height="1" fill="#fff"/><rect x="0" y="9" width="1" height="1" fill="#a6a6a6"/><rect x="4" y="10" width="1" height="1" fill="#fff"/><rect x="3" y="9" width="1" height="1" fill="#a6a6a6"/><rect x="1" y="13" width="1" height="1" fill="#fff"/><rect x="0" y="12" width="1" height="1" fill="#a6a6a6"/><rect x="4" y="13" width="1" height="1" fill="#fff"/><rect x="3" y="12" width="1" height="1" fill="#a6a6a6"/><rect x="1" y="16" width="1" height="1" fill="#fff"/><rect x="0" y="15" width="1" height="1" fill="#a6a6a6"/><rect x="4" y="16" width="1" height="1" fill="#fff"/><rect x="3" y="15" width="1" height="1" fill="#a6a6a6"/></svg>
<svg style="left:868px;top:97px" width="30" height="27" viewBox="0 0 30 27" ><path d="M4 5L14 3L25 6L23 13L17 20L5 17Z" fill="#6b98d0" stroke="#3a5a8a" stroke-width="0.9"/><path d="M4 5L13 11L25 6M13 11L17 20M13 11L5 17" fill="none" stroke="#3a5a8a" stroke-width="0.9"/><g fill="#f3d23a" stroke="#8a7010" stroke-width="0.7"><circle cx="4" cy="5" r="2"/><circle cx="14" cy="3" r="1.8"/><circle cx="25" cy="6" r="2"/><circle cx="13" cy="11" r="1.8"/><circle cx="5" cy="17" r="2"/><circle cx="17" cy="20" r="1.8"/></g><path d="M17 19L20.5 24L28 13" fill="none" stroke="#e8c42a" stroke-width="2.6"/><path d="M17 19L20.5 24L28 13" fill="none" stroke="#6a5a10" stroke-width="0.6"/></svg>
<svg style="left:6px;top:139px" width="6" height="18" viewBox="0 0 6 18" shape-rendering="crispEdges"><rect x="1" y="1" width="1" height="1" fill="#fff"/><rect x="0" y="0" width="1" height="1" fill="#a6a6a6"/><rect x="4" y="1" width="1" height="1" fill="#fff"/><rect x="3" y="0" width="1" height="1" fill="#a6a6a6"/><rect x="1" y="4" width="1" height="1" fill="#fff"/><rect x="0" y="3" width="1" height="1" fill="#a6a6a6"/><rect x="4" y="4" width="1" height="1" fill="#fff"/><rect x="3" y="3" width="1" height="1" fill="#a6a6a6"/><rect x="1" y="7" width="1" height="1" fill="#fff"/><rect x="0" y="6" width="1" height="1" fill="#a6a6a6"/><rect x="4" y="7" width="1" height="1" fill="#fff"/><rect x="3" y="6" width="1" height="1" fill="#a6a6a6"/><rect x="1" y="10" width="1" height="1" fill="#fff"/><rect x="0" y="9" width="1" height="1" fill="#a6a6a6"/><rect x="4" y="10" width="1" height="1" fill="#fff"/><rect x="3" y="9" width="1" height="1" fill="#a6a6a6"/><rect x="1" y="13" width="1" height="1" fill="#fff"/><rect x="0" y="12" width="1" height="1" fill="#a6a6a6"/><rect x="4" y="13" width="1" height="1" fill="#fff"/><rect x="3" y="12" width="1" height="1" fill="#a6a6a6"/><rect x="1" y="16" width="1" height="1" fill="#fff"/><rect x="0" y="15" width="1" height="1" fill="#a6a6a6"/><rect x="4" y="16" width="1" height="1" fill="#fff"/><rect x="3" y="15" width="1" height="1" fill="#a6a6a6"/></svg>
<svg style="left:17px;top:138px" width="24" height="14" viewBox="0 0 24 14" ><path d="M5 1.5H22.5V12.5H5L0.8 7Z" fill="#f5d63a" stroke="#c8a510" stroke-width="0.9"/><text x="5.5" y="10.8" font-family="Liberation Sans" font-weight="bold" font-size="9.5" fill="#333">abc</text></svg>
<svg style="left:52px;top:135px" width="22" height="25" viewBox="0 0 22 25" ><circle cx="8.5" cy="8.5" r="7.5" fill="#d33b2a"/><path d="M8.5 8.5V1A7.5 7.5 0 0 1 15.8 6.8Z" fill="#f3d23a"/><path d="M8.5 8.5L1.2 7A7.5 7.5 0 0 0 6 15.5Z" fill="#4ea049"/><rect x="10" y="12" width="4" height="12" fill="#4ea049"/><rect x="6" y="18" width="4" height="6" fill="#f3d23a"/><rect x="15" y="17" width="5" height="7" fill="#c02020"/></svg>
<div class="a" style="left:84px;top:138px;width:1px;height:21px;background:#cfcfcf"></div>
<svg style="left:90px;top:136px" width="27" height="26" viewBox="0 0 27 26" ><path d="M5 2.5H22V13.5H5L0.8 8Z" fill="#d8e6f6" stroke="#7aa3d6" stroke-width="0.9"/><text x="5" y="11.5" font-family="Liberation Sans" font-weight="bold" font-size="9.5" fill="#333">ab</text><path d="M19 10V18" stroke="#ddd" stroke-width="2"/><circle cx="19.5" cy="20" r="4.8" fill="#b3262a"/><circle cx="18" cy="18.5" r="1.2" fill="#e57070"/></svg>
<svg style="left:123px;top:138px" width="24" height="14" viewBox="0 0 24 14" ><path d="M5 1.5H22.5V12.5H5L0.8 7Z" fill="#fff" stroke="#e02020" stroke-width="1.2"/><text x="5.5" y="10.8" font-family="Liberation Sans" font-weight="bold" font-size="9.5" fill="#e02020">abc</text></svg>

<!-- map canvas -->
<div class="a" id="map" style="left:319px;top:168px;width:584px;height:463px;background:#fff;border-left:1px solid #a0a0a0;border-top:1px solid #a0a0a0;border-right:1px solid #a0a0a0;border-bottom:1px solid #a0a0a0"></div>
<svg style="left:319px;top:168px" width="584" height="462" viewBox="0 0 584 462"><g fill="#709c72" stroke="#1e1e1e" stroke-width="1"><circle cx="139.8" cy="133.7" r="3.75"/><circle cx="153.8" cy="146.7" r="3.75"/><circle cx="181.8" cy="150.8" r="3.75"/><circle cx="77.7" cy="155.0" r="3.75"/><circle cx="77.3" cy="159.5" r="3.75"/><circle cx="76.8" cy="160.8" r="3.75"/><circle cx="84.7" cy="165.7" r="3.75"/><circle cx="109.7" cy="152.5" r="3.75"/><circle cx="114.3" cy="157.0" r="3.75"/><circle cx="96.8" cy="165.7" r="3.75"/><circle cx="97.7" cy="175.3" r="3.75"/><circle cx="96.0" cy="180.3" r="3.75"/><circle cx="95.2" cy="186.2" r="3.75"/><circle cx="96.8" cy="192.0" r="3.75"/><circle cx="116.0" cy="212.8" r="3.75"/><circle cx="118.2" cy="292.8" r="3.75"/><circle cx="163.4" cy="253.4" r="3.75"/><circle cx="164.4" cy="250.5" r="3.75"/><circle cx="178.6" cy="256.8" r="3.75"/><circle cx="188.0" cy="263.9" r="3.75"/><circle cx="167.8" cy="268.6" r="3.75"/><circle cx="175.3" cy="271.1" r="3.75"/><circle cx="177.2" cy="275.7" r="3.75"/><circle cx="182.1" cy="275.7" r="3.75"/><circle cx="178.2" cy="281.0" r="3.75"/><circle cx="178.2" cy="286.9" r="3.75"/><circle cx="187.1" cy="278.0" r="3.75"/><circle cx="186.1" cy="288.9" r="3.75"/><circle cx="187.1" cy="293.8" r="3.75"/><circle cx="188.0" cy="299.7" r="3.75"/><circle cx="177.2" cy="301.6" r="3.75"/><circle cx="181.2" cy="301.6" r="3.75"/><circle cx="174.3" cy="307.6" r="3.75"/><circle cx="173.3" cy="314.4" r="3.75"/><circle cx="178.2" cy="314.4" r="3.75"/><circle cx="175.3" cy="328.2" r="3.75"/><circle cx="178.2" cy="333.1" r="3.75"/><circle cx="183.1" cy="334.7" r="3.75"/><circle cx="181.2" cy="330.2" r="3.75"/><circle cx="209.8" cy="145.7" r="3.75"/><circle cx="218.0" cy="154.8" r="3.75"/><circle cx="202.7" cy="173.7" r="3.75"/><circle cx="206.0" cy="175.7" r="3.75"/><circle cx="253.8" cy="149.8" r="3.75"/><circle cx="248.8" cy="191.7" r="3.75"/><circle cx="262.7" cy="198.7" r="3.75"/><circle cx="262.7" cy="205.8" r="3.75"/><circle cx="265.2" cy="207.0" r="3.75"/><circle cx="261.8" cy="217.8" r="3.75"/><circle cx="267.7" cy="218.7" r="3.75"/><circle cx="264.3" cy="222.0" r="3.75"/><circle cx="252.7" cy="223.7" r="3.75"/><circle cx="276.8" cy="153.7" r="3.75"/><circle cx="286.8" cy="156.7" r="3.75"/><circle cx="296.8" cy="156.2" r="3.75"/><circle cx="304.3" cy="150.3" r="3.75"/><circle cx="304.3" cy="156.2" r="3.75"/><circle cx="281.8" cy="162.0" r="3.75"/><circle cx="278.5" cy="166.2" r="3.75"/><circle cx="275.2" cy="169.5" r="3.75"/><circle cx="287.7" cy="169.5" r="3.75"/><circle cx="296.0" cy="168.7" r="3.75"/><circle cx="302.7" cy="167.0" r="3.75"/><circle cx="293.5" cy="173.7" r="3.75"/><circle cx="301.8" cy="172.0" r="3.75"/><circle cx="302.7" cy="179.5" r="3.75"/><circle cx="296.0" cy="179.5" r="3.75"/><circle cx="284.3" cy="182.0" r="3.75"/><circle cx="274.3" cy="185.3" r="3.75"/><circle cx="273.5" cy="189.5" r="3.75"/><circle cx="282.7" cy="187.0" r="3.75"/><circle cx="291.8" cy="185.3" r="3.75"/><circle cx="287.7" cy="191.2" r="3.75"/><circle cx="294.3" cy="192.8" r="3.75"/><circle cx="299.3" cy="193.7" r="3.75"/><circle cx="276.8" cy="197.8" r="3.75"/><circle cx="281.0" cy="197.8" r="3.75"/><circle cx="276.0" cy="201.2" r="3.75"/><circle cx="304.3" cy="194.5" r="3.75"/><circle cx="202.7" cy="241.6" r="3.75"/><circle cx="206.6" cy="242.6" r="3.75"/><circle cx="194.8" cy="254.4" r="3.75"/><circle cx="212.5" cy="252.8" r="3.75"/><circle cx="220.4" cy="254.4" r="3.75"/><circle cx="222.3" cy="258.3" r="3.75"/><circle cx="228.2" cy="256.4" r="3.75"/><circle cx="234.1" cy="259.3" r="3.75"/><circle cx="233.2" cy="264.2" r="3.75"/><circle cx="228.2" cy="270.1" r="3.75"/><circle cx="189.9" cy="278.0" r="3.75"/><circle cx="200.7" cy="274.5" r="3.75"/><circle cx="198.7" cy="280.0" r="3.75"/><circle cx="202.7" cy="282.9" r="3.75"/><circle cx="213.5" cy="275.1" r="3.75"/><circle cx="220.4" cy="280.0" r="3.75"/><circle cx="226.3" cy="281.0" r="3.75"/><circle cx="215.4" cy="286.9" r="3.75"/><circle cx="221.4" cy="285.9" r="3.75"/><circle cx="211.5" cy="290.8" r="3.75"/><circle cx="198.7" cy="289.8" r="3.75"/><circle cx="204.6" cy="290.8" r="3.75"/><circle cx="186.9" cy="291.8" r="3.75"/><circle cx="208.6" cy="297.3" r="3.75"/><circle cx="196.7" cy="299.7" r="3.75"/><circle cx="197.7" cy="304.6" r="3.75"/><circle cx="201.7" cy="303.6" r="3.75"/><circle cx="198.7" cy="309.9" r="3.75"/><circle cx="251.9" cy="226.8" r="3.75"/><circle cx="260.7" cy="227.8" r="3.75"/><circle cx="263.7" cy="220.9" r="3.75"/><circle cx="264.7" cy="231.8" r="3.75"/><circle cx="268.6" cy="236.7" r="3.75"/><circle cx="272.5" cy="241.0" r="3.75"/><circle cx="276.1" cy="230.8" r="3.75"/><circle cx="281.4" cy="238.7" r="3.75"/><circle cx="283.4" cy="241.6" r="3.75"/><circle cx="286.3" cy="230.8" r="3.75"/><circle cx="292.2" cy="229.8" r="3.75"/><circle cx="297.1" cy="229.8" r="3.75"/><circle cx="301.5" cy="231.8" r="3.75"/><circle cx="289.3" cy="241.6" r="3.75"/><circle cx="294.2" cy="239.6" r="3.75"/><circle cx="300.1" cy="236.7" r="3.75"/><circle cx="300.1" cy="242.6" r="3.75"/><circle cx="299.1" cy="249.5" r="3.75"/><circle cx="304.0" cy="249.5" r="3.75"/><circle cx="312.7" cy="127.8" r="3.75"/><circle cx="317.7" cy="141.7" r="3.75"/><circle cx="322.7" cy="147.8" r="3.75"/><circle cx="329.0" cy="146.7" r="3.75"/><circle cx="335.7" cy="141.7" r="3.75"/><circle cx="341.0" cy="142.8" r="3.75"/><circle cx="353.0" cy="149.5" r="3.75"/><circle cx="306.0" cy="150.3" r="3.75"/><circle cx="297.7" cy="155.3" r="3.75"/><circle cx="306.0" cy="156.2" r="3.75"/><circle cx="316.8" cy="157.0" r="3.75"/><circle cx="327.7" cy="155.7" r="3.75"/><circle cx="336.0" cy="156.7" r="3.75"/><circle cx="346.8" cy="162.3" r="3.75"/><circle cx="356.8" cy="162.3" r="3.75"/><circle cx="366.0" cy="163.7" r="3.75"/><circle cx="366.8" cy="167.0" r="3.75"/><circle cx="376.0" cy="159.5" r="3.75"/><circle cx="376.0" cy="165.0" r="3.75"/><circle cx="384.0" cy="161.7" r="3.75"/><circle cx="384.3" cy="164.5" r="3.75"/><circle cx="404.0" cy="155.0" r="3.75"/><circle cx="404.3" cy="164.5" r="3.75"/><circle cx="400.7" cy="171.2" r="3.75"/><circle cx="417.7" cy="164.5" r="3.75"/><circle cx="419.3" cy="167.0" r="3.75"/><circle cx="310.2" cy="167.8" r="3.75"/><circle cx="317.7" cy="165.3" r="3.75"/><circle cx="322.7" cy="168.7" r="3.75"/><circle cx="333.5" cy="165.3" r="3.75"/><circle cx="336.8" cy="171.2" r="3.75"/><circle cx="346.0" cy="172.8" r="3.75"/><circle cx="351.0" cy="177.0" r="3.75"/><circle cx="357.7" cy="174.5" r="3.75"/><circle cx="361.0" cy="169.5" r="3.75"/><circle cx="314.3" cy="174.5" r="3.75"/><circle cx="326.0" cy="173.7" r="3.75"/><circle cx="330.2" cy="180.3" r="3.75"/><circle cx="341.8" cy="179.5" r="3.75"/><circle cx="307.7" cy="184.5" r="3.75"/><circle cx="320.2" cy="185.3" r="3.75"/><circle cx="334.3" cy="186.2" r="3.75"/><circle cx="340.2" cy="187.8" r="3.75"/><circle cx="326.0" cy="191.2" r="3.75"/><circle cx="311.0" cy="194.5" r="3.75"/><circle cx="308.5" cy="199.5" r="3.75"/><circle cx="321.0" cy="199.5" r="3.75"/><circle cx="334.3" cy="201.2" r="3.75"/><circle cx="338.5" cy="203.7" r="3.75"/><circle cx="344.3" cy="200.3" r="3.75"/><circle cx="346.8" cy="192.8" r="3.75"/><circle cx="336.8" cy="209.5" r="3.75"/><circle cx="340.2" cy="212.8" r="3.75"/><circle cx="346.0" cy="218.7" r="3.75"/><circle cx="351.0" cy="212.0" r="3.75"/><circle cx="340.2" cy="225.3" r="3.75"/><circle cx="357.7" cy="224.5" r="3.75"/><circle cx="350.2" cy="225.3" r="3.75"/><circle cx="358.5" cy="184.5" r="3.75"/><circle cx="366.8" cy="186.2" r="3.75"/><circle cx="360.2" cy="190.3" r="3.75"/><circle cx="356.0" cy="193.7" r="3.75"/><circle cx="368.5" cy="194.5" r="3.75"/><circle cx="358.5" cy="198.7" r="3.75"/><circle cx="364.3" cy="204.5" r="3.75"/><circle cx="371.0" cy="203.7" r="3.75"/><circle cx="361.8" cy="212.0" r="3.75"/><circle cx="368.5" cy="210.3" r="3.75"/><circle cx="375.2" cy="211.2" r="3.75"/><circle cx="380.2" cy="213.7" r="3.75"/><circle cx="383.5" cy="204.5" r="3.75"/><circle cx="386.8" cy="209.5" r="3.75"/><circle cx="379.3" cy="190.3" r="3.75"/><circle cx="381.8" cy="193.7" r="3.75"/><circle cx="387.7" cy="178.7" r="3.75"/><circle cx="396.8" cy="185.3" r="3.75"/><circle cx="405.2" cy="182.8" r="3.75"/><circle cx="409.3" cy="182.8" r="3.75"/><circle cx="407.7" cy="188.7" r="3.75"/><circle cx="413.5" cy="192.8" r="3.75"/><circle cx="396.8" cy="197.0" r="3.75"/><circle cx="404.3" cy="197.0" r="3.75"/><circle cx="393.5" cy="202.8" r="3.75"/><circle cx="401.0" cy="202.8" r="3.75"/><circle cx="409.3" cy="205.3" r="3.75"/><circle cx="415.2" cy="208.7" r="3.75"/><circle cx="394.3" cy="212.0" r="3.75"/><circle cx="402.7" cy="210.3" r="3.75"/><circle cx="410.2" cy="213.7" r="3.75"/><circle cx="402.7" cy="220.3" r="3.75"/><circle cx="412.7" cy="222.0" r="3.75"/><circle cx="417.7" cy="217.0" r="3.75"/><circle cx="309.8" cy="235.7" r="3.75"/><circle cx="311.7" cy="231.8" r="3.75"/><circle cx="306.8" cy="244.6" r="3.75"/><circle cx="317.7" cy="243.6" r="3.75"/><circle cx="347.2" cy="220.0" r="3.75"/><circle cx="350.1" cy="226.8" r="3.75"/><circle cx="358.0" cy="225.9" r="3.75"/><circle cx="359.0" cy="230.8" r="3.75"/><circle cx="350.1" cy="236.7" r="3.75"/><circle cx="355.0" cy="235.7" r="3.75"/><circle cx="360.0" cy="246.5" r="3.75"/><circle cx="327.5" cy="249.5" r="3.75"/><circle cx="335.4" cy="253.4" r="3.75"/><circle cx="340.3" cy="250.5" r="3.75"/><circle cx="344.2" cy="249.5" r="3.75"/><circle cx="347.2" cy="253.4" r="3.75"/><circle cx="352.1" cy="256.4" r="3.75"/><circle cx="349.1" cy="260.3" r="3.75"/><circle cx="312.7" cy="257.4" r="3.75"/><circle cx="309.8" cy="263.9" r="3.75"/><circle cx="312.7" cy="270.5" r="3.75"/><circle cx="324.5" cy="259.3" r="3.75"/><circle cx="331.4" cy="268.6" r="3.75"/><circle cx="332.4" cy="275.1" r="3.75"/><circle cx="328.5" cy="279.0" r="3.75"/><circle cx="337.3" cy="279.0" r="3.75"/><circle cx="333.4" cy="282.0" r="3.75"/><circle cx="341.7" cy="271.7" r="3.75"/><circle cx="344.2" cy="275.1" r="3.75"/><circle cx="357.0" cy="269.2" r="3.75"/><circle cx="360.0" cy="271.1" r="3.75"/><circle cx="362.9" cy="280.0" r="3.75"/><circle cx="375.7" cy="257.7" r="3.75"/><circle cx="378.7" cy="282.9" r="3.75"/><circle cx="315.7" cy="285.9" r="3.75"/><circle cx="328.5" cy="288.9" r="3.75"/><circle cx="335.4" cy="286.9" r="3.75"/><circle cx="339.7" cy="290.8" r="3.75"/><circle cx="332.4" cy="291.8" r="3.75"/><circle cx="331.4" cy="296.7" r="3.75"/><circle cx="337.3" cy="297.7" r="3.75"/><circle cx="317.7" cy="303.6" r="3.75"/><circle cx="328.5" cy="303.6" r="3.75"/><circle cx="410.2" cy="223.9" r="3.75"/><circle cx="414.1" cy="229.8" r="3.75"/><circle cx="408.2" cy="234.7" r="3.75"/><circle cx="413.7" cy="238.7" r="3.75"/><circle cx="403.9" cy="243.6" r="3.75"/><circle cx="418.0" cy="220.9" r="3.75"/><circle cx="426.0" cy="181.7" r="3.75"/><circle cx="451.8" cy="168.7" r="3.75"/><circle cx="455.7" cy="175.7" r="3.75"/><circle cx="431.0" cy="204.5" r="3.75"/><circle cx="421.8" cy="207.0" r="3.75"/><circle cx="429.3" cy="212.8" r="3.75"/><circle cx="438.5" cy="217.0" r="3.75"/><circle cx="438.5" cy="223.7" r="3.75"/><circle cx="448.5" cy="222.8" r="3.75"/><circle cx="450.2" cy="193.7" r="3.75"/><circle cx="451.0" cy="202.8" r="3.75"/><circle cx="456.0" cy="203.7" r="3.75"/><circle cx="449.3" cy="212.0" r="3.75"/><circle cx="454.3" cy="217.0" r="3.75"/><circle cx="459.3" cy="222.0" r="3.75"/><circle cx="463.5" cy="187.0" r="3.75"/><circle cx="471.0" cy="187.8" r="3.75"/><circle cx="459.3" cy="197.0" r="3.75"/><circle cx="466.8" cy="197.0" r="3.75"/><circle cx="467.7" cy="202.8" r="3.75"/><circle cx="478.5" cy="189.5" r="3.75"/><circle cx="476.8" cy="193.7" r="3.75"/><circle cx="475.2" cy="201.2" r="3.75"/><circle cx="479.3" cy="202.0" r="3.75"/><circle cx="461.0" cy="210.3" r="3.75"/><circle cx="466.8" cy="215.3" r="3.75"/><circle cx="477.7" cy="211.2" r="3.75"/><circle cx="476.8" cy="221.2" r="3.75"/><circle cx="478.5" cy="226.2" r="3.75"/><circle cx="486.0" cy="178.7" r="3.75"/><circle cx="492.7" cy="176.2" r="3.75"/><circle cx="496.0" cy="182.8" r="3.75"/><circle cx="482.7" cy="186.2" r="3.75"/><circle cx="486.8" cy="191.2" r="3.75"/><circle cx="491.0" cy="190.3" r="3.75"/><circle cx="486.8" cy="197.8" r="3.75"/><circle cx="492.7" cy="197.0" r="3.75"/><circle cx="499.3" cy="196.2" r="3.75"/><circle cx="502.7" cy="194.5" r="3.75"/><circle cx="507.7" cy="194.5" r="3.75"/><circle cx="509.3" cy="190.3" r="3.75"/><circle cx="510.2" cy="182.8" r="3.75"/><circle cx="516.8" cy="225.3" r="3.75"/><circle cx="416.9" cy="219.0" r="3.75"/><circle cx="422.8" cy="219.0" r="3.75"/><circle cx="431.7" cy="217.0" r="3.75"/><circle cx="445.5" cy="228.8" r="3.75"/><circle cx="457.3" cy="225.9" r="3.75"/><circle cx="455.3" cy="233.7" r="3.75"/><circle cx="442.5" cy="237.7" r="3.75"/><circle cx="445.5" cy="241.6" r="3.75"/><circle cx="442.5" cy="245.6" r="3.75"/><circle cx="450.4" cy="248.5" r="3.75"/><circle cx="445.5" cy="252.5" r="3.75"/><circle cx="452.4" cy="254.4" r="3.75"/><circle cx="455.3" cy="259.4" r="3.75"/><circle cx="464.2" cy="261.9" r="3.75"/><circle cx="469.1" cy="263.9" r="3.75"/><circle cx="476.0" cy="258.8" r="3.75"/><circle cx="460.6" cy="247.9" r="3.75"/><circle cx="469.1" cy="241.6" r="3.75"/><circle cx="478.0" cy="227.8" r="3.75"/><circle cx="482.9" cy="233.7" r="3.75"/><circle cx="484.9" cy="238.7" r="3.75"/><circle cx="479.0" cy="239.7" r="3.75"/><circle cx="498.7" cy="238.7" r="3.75"/><circle cx="504.6" cy="235.7" r="3.75"/><circle cx="516.4" cy="226.9" r="3.75"/><circle cx="514.4" cy="229.8" r="3.75"/><circle cx="525.7" cy="238.7" r="3.75"/><circle cx="535.5" cy="239.7" r="3.75"/><circle cx="544.0" cy="241.6" r="3.75"/><circle cx="556.8" cy="239.7" r="3.75"/><circle cx="559.7" cy="247.5" r="3.75"/><circle cx="549.9" cy="250.5" r="3.75"/><circle cx="513.8" cy="255.8" r="3.75"/><circle cx="518.8" cy="264.7" r="3.75"/><circle cx="538.7" cy="264.7" r="3.75"/><circle cx="568.6" cy="263.7" r="3.75"/><circle cx="484.9" cy="263.7" r="3.75"/><circle cx="493.7" cy="269.8" r="3.75"/><circle cx="440.0" cy="269.8" r="3.75"/><circle cx="480.0" cy="278.5" r="3.75"/><circle cx="473.6" cy="282.6" r="3.75"/><circle cx="497.7" cy="287.5" r="3.75"/><circle cx="516.8" cy="276.1" r="3.75"/><circle cx="517.4" cy="281.0" r="3.75"/><circle cx="523.9" cy="286.9" r="3.75"/><circle cx="527.8" cy="292.8" r="3.75"/><circle cx="528.8" cy="294.8" r="3.75"/><circle cx="549.9" cy="274.1" r="3.75"/><circle cx="551.9" cy="277.7" r="3.75"/><circle cx="548.9" cy="285.0" r="3.75"/><circle cx="566.6" cy="277.7" r="3.75"/><circle cx="567.6" cy="279.1" r="3.75"/><circle cx="551.9" cy="295.8" r="3.75"/><circle cx="469.7" cy="300.7" r="3.75"/><circle cx="509.9" cy="300.7" r="3.75"/><circle cx="505.6" cy="304.7" r="3.75"/><circle cx="514.8" cy="309.6" r="3.75"/><circle cx="520.9" cy="300.7" r="3.75"/><circle cx="524.9" cy="303.7" r="3.75"/><circle cx="522.3" cy="306.0" r="3.75"/><circle cx="519.7" cy="317.9" r="3.75"/><circle cx="561.7" cy="308.6" r="3.75"/><circle cx="562.7" cy="313.5" r="3.75"/><circle cx="558.8" cy="318.5" r="3.75"/><circle cx="554.8" cy="321.8" r="3.75"/><circle cx="86.0" cy="165.6" r="3.75"/><circle cx="100.8" cy="162.2" r="3.75"/><circle cx="95.1" cy="173.0" r="3.75"/><circle cx="95.1" cy="179.3" r="3.75"/><circle cx="100.8" cy="188.4" r="3.75"/><circle cx="120.1" cy="209.4" r="3.75"/><circle cx="115.0" cy="207.7" r="3.75"/><circle cx="94.0" cy="174.7" r="3.75"/><circle cx="92.8" cy="181.5" r="3.75"/><circle cx="97.9" cy="195.2" r="3.75"/><circle cx="297.3" cy="159.0" r="3.75"/><circle cx="318.0" cy="143.1" r="3.75"/><circle cx="336.0" cy="143.1" r="3.75"/><circle cx="287.2" cy="164.3" r="3.75"/><circle cx="283.0" cy="169.6" r="3.75"/><circle cx="308.4" cy="162.2" r="3.75"/><circle cx="325.4" cy="163.2" r="3.75"/><circle cx="342.4" cy="172.8" r="3.75"/><circle cx="344.5" cy="162.2" r="3.75"/><circle cx="333.9" cy="176.0" r="3.75"/><circle cx="310.6" cy="187.6" r="3.75"/><circle cx="327.5" cy="185.5" r="3.75"/><circle cx="287.2" cy="195.0" r="3.75"/><circle cx="305.3" cy="192.9" r="3.75"/><circle cx="328.6" cy="195.0" r="3.75"/><circle cx="336.0" cy="192.9" r="3.75"/><circle cx="342.4" cy="198.2" r="3.75"/><circle cx="340.3" cy="208.8" r="3.75"/><circle cx="267.1" cy="206.7" r="3.75"/><circle cx="266.0" cy="199.3" r="3.75"/><circle cx="295.7" cy="172.8" r="3.75"/><circle cx="313.7" cy="181.3" r="3.75"/><circle cx="322.2" cy="181.3" r="3.75"/><circle cx="290.4" cy="180.2" r="3.75"/><circle cx="353.0" cy="152.0" r="3.75"/><circle cx="350.6" cy="169.0" r="3.75"/><circle cx="338.4" cy="192.0" r="3.75"/><circle cx="424.5" cy="181.7" r="3.75"/><circle cx="402.1" cy="209.0" r="3.75"/><circle cx="411.8" cy="223.6" r="3.75"/><circle cx="424.5" cy="213.9" r="3.75"/><circle cx="407.2" cy="196.1" r="3.75"/><circle cx="432.1" cy="215.5" r="3.75"/><circle cx="423.6" cy="215.5" r="3.75"/><circle cx="419.3" cy="222.8" r="3.75"/><circle cx="408.4" cy="231.3" r="3.75"/><circle cx="406.6" cy="244.0" r="3.75"/><circle cx="443.6" cy="220.4" r="3.75"/><circle cx="452.1" cy="232.5" r="3.75"/><circle cx="443.6" cy="244.6" r="3.75"/><circle cx="460.6" cy="245.2" r="3.75"/><circle cx="458.8" cy="213.7" r="3.75"/><circle cx="476.4" cy="194.9" r="3.75"/><circle cx="473.9" cy="201.0" r="3.75"/><circle cx="477.0" cy="214.9" r="3.75"/><circle cx="493.3" cy="181.6" r="3.75"/><circle cx="481.8" cy="188.8" r="3.75"/><circle cx="200.4" cy="173.8" r="3.75"/><circle cx="103.3" cy="163.5" r="3.75"/><circle cx="110.1" cy="165.8" r="3.75"/><circle cx="115.4" cy="163.5" r="3.75"/><circle cx="135.8" cy="163.5" r="3.75"/><circle cx="121.8" cy="168.8" r="3.75"/><circle cx="102.5" cy="170.3" r="3.75"/><circle cx="109.7" cy="171.1" r="3.75"/><circle cx="125.2" cy="172.2" r="3.75"/><circle cx="131.3" cy="173.0" r="3.75"/><circle cx="104.0" cy="175.6" r="3.75"/><circle cx="113.5" cy="177.5" r="3.75"/><circle cx="119.9" cy="178.7" r="3.75"/><circle cx="131.7" cy="180.9" r="3.75"/><circle cx="106.7" cy="181.7" r="3.75"/><circle cx="121.5" cy="183.2" r="3.75"/><circle cx="113.9" cy="186.6" r="3.75"/><circle cx="124.9" cy="187.8" r="3.75"/><circle cx="103.3" cy="186.2" r="3.75"/><circle cx="109.0" cy="193.4" r="3.75"/><circle cx="121.5" cy="194.6" r="3.75"/><circle cx="129.8" cy="195.7" r="3.75"/><circle cx="104.0" cy="197.6" r="3.75"/><circle cx="113.5" cy="197.6" r="3.75"/><circle cx="121.8" cy="199.9" r="3.75"/><circle cx="114.6" cy="204.4" r="3.75"/><circle cx="123.0" cy="205.2" r="3.75"/><circle cx="116.2" cy="209.7" r="3.75"/><circle cx="131.3" cy="209.0" r="3.75"/><circle cx="123.2" cy="208.8" r="3.75"/><circle cx="136.5" cy="209.7" r="3.75"/><circle cx="122.8" cy="213.2" r="3.75"/><circle cx="126.3" cy="219.4" r="3.75"/><circle cx="133.4" cy="219.8" r="3.75"/><circle cx="137.8" cy="221.2" r="3.75"/><circle cx="123.7" cy="222.5" r="3.75"/><circle cx="133.4" cy="224.3" r="3.75"/><circle cx="137.8" cy="225.1" r="3.75"/><circle cx="143.1" cy="226.9" r="3.75"/><circle cx="148.4" cy="217.6" r="3.75"/><circle cx="152.9" cy="217.6" r="3.75"/><circle cx="145.8" cy="222.5" r="3.75"/><circle cx="151.5" cy="223.0" r="3.75"/><circle cx="146.7" cy="228.2" r="3.75"/><circle cx="152.0" cy="228.7" r="3.75"/><circle cx="156.0" cy="233.5" r="3.75"/><circle cx="159.0" cy="238.0" r="3.75"/><circle cx="164.4" cy="235.3" r="3.75"/><circle cx="170.6" cy="233.5" r="3.75"/><circle cx="176.8" cy="233.5" r="3.75"/><circle cx="183.8" cy="233.5" r="3.75"/><circle cx="179.4" cy="229.6" r="3.75"/><circle cx="172.3" cy="242.4" r="3.75"/><circle cx="167.9" cy="244.2" r="3.75"/><circle cx="159.9" cy="209.7" r="3.75"/><circle cx="168.8" cy="210.5" r="3.75"/><circle cx="159.1" cy="215.0" r="3.75"/><circle cx="162.6" cy="220.3" r="3.75"/><circle cx="168.8" cy="222.5" r="3.75"/><circle cx="167.9" cy="216.7" r="3.75"/><circle cx="171.4" cy="214.1" r="3.75"/><circle cx="178.1" cy="215.4" r="3.75"/><circle cx="175.0" cy="221.6" r="3.75"/><circle cx="179.4" cy="222.0" r="3.75"/><circle cx="185.6" cy="222.0" r="3.75"/><circle cx="191.8" cy="223.4" r="3.75"/><circle cx="192.7" cy="228.7" r="3.75"/><circle cx="196.2" cy="229.6" r="3.75"/><circle cx="191.8" cy="232.7" r="3.75"/><circle cx="197.1" cy="239.7" r="3.75"/><circle cx="193.6" cy="244.2" r="3.75"/><circle cx="142.1" cy="159.3" r="3.75"/><circle cx="181.8" cy="160.0" r="3.75"/><circle cx="183.7" cy="167.6" r="3.75"/><circle cx="137.1" cy="172.9" r="3.75"/><circle cx="142.8" cy="173.3" r="3.75"/><circle cx="148.9" cy="174.4" r="3.75"/><circle cx="156.1" cy="177.5" r="3.75"/><circle cx="161.8" cy="173.7" r="3.75"/><circle cx="162.1" cy="176.7" r="3.75"/><circle cx="164.0" cy="182.0" r="3.75"/><circle cx="158.0" cy="185.0" r="3.75"/><circle cx="150.8" cy="185.0" r="3.75"/><circle cx="142.8" cy="179.7" r="3.75"/><circle cx="138.3" cy="185.0" r="3.75"/><circle cx="146.6" cy="189.6" r="3.75"/><circle cx="139.0" cy="193.4" r="3.75"/><circle cx="147.7" cy="195.6" r="3.75"/><circle cx="153.4" cy="191.8" r="3.75"/><circle cx="161.0" cy="188.8" r="3.75"/><circle cx="167.8" cy="189.6" r="3.75"/><circle cx="172.4" cy="180.5" r="3.75"/><circle cx="177.3" cy="175.9" r="3.75"/><circle cx="178.0" cy="183.5" r="3.75"/><circle cx="172.7" cy="186.9" r="3.75"/><circle cx="170.1" cy="194.1" r="3.75"/><circle cx="163.3" cy="195.6" r="3.75"/><circle cx="156.5" cy="197.2" r="3.75"/><circle cx="139.0" cy="202.5" r="3.75"/><circle cx="147.4" cy="202.5" r="3.75"/><circle cx="156.5" cy="203.2" r="3.75"/><circle cx="161.8" cy="204.0" r="3.75"/><circle cx="167.8" cy="205.5" r="3.75"/><circle cx="186.0" cy="179.7" r="3.75"/><circle cx="189.8" cy="177.5" r="3.75"/><circle cx="194.3" cy="177.5" r="3.75"/><circle cx="187.9" cy="199.8" r="3.75"/><circle cx="483.0" cy="195.0" r="3.75"/><circle cx="301.0" cy="187.0" r="3.75"/><circle cx="420.0" cy="212.0" r="3.75"/><circle cx="293.0" cy="164.0" r="3.75"/><circle cx="300.0" cy="163.0" r="3.75"/><circle cx="354.0" cy="218.0" r="3.75"/><circle cx="279.0" cy="192.0" r="3.75"/><circle cx="320.0" cy="191.0" r="3.75"/><circle cx="429.0" cy="222.0" r="3.75"/><circle cx="488.0" cy="184.0" r="3.75"/><circle cx="419.0" cy="228.0" r="3.75"/><circle cx="496.0" cy="188.0" r="3.75"/><circle cx="471.0" cy="193.0" r="3.75"/><circle cx="331.0" cy="190.0" r="3.75"/><circle cx="424.0" cy="224.0" r="3.75"/><circle cx="335.0" cy="181.0" r="3.75"/><circle cx="408.0" cy="218.0" r="3.75"/><circle cx="405.0" cy="226.0" r="3.75"/><circle cx="291.0" cy="236.0" r="3.75"/><circle cx="272.0" cy="198.0" r="3.75"/><circle cx="271.0" cy="203.0" r="3.75"/><circle cx="291.0" cy="159.0" r="3.75"/><circle cx="289.0" cy="175.0" r="3.75"/><circle cx="426.0" cy="209.0" r="3.75"/><circle cx="118.0" cy="217.0" r="3.75"/></g></svg>

<!-- left panel: browser -->
<div class="tx" style="left:5px;top:171px;letter-spacing:-0.3px">Browser</div>
<div class="a" style="left:1px;top:217px;width:312px;height:159px;background:#fff;border-top:1px solid #cfcfcf;border-right:1px solid #a0a0a0"></div>
<svg style="left:9px;top:193px" width="17" height="17" viewBox="0 0 17 17"><rect x="1.5" y="1.5" width="11" height="11" fill="#fff" stroke="#777" stroke-width="1"/><circle cx="13" cy="13" r="3" fill="#fff" stroke="#4a9a4a" stroke-width="1.6"/></svg>
<svg style="left:34px;top:193px" width="17" height="16" viewBox="0 0 17 16"><path d="M2 7C2.5 4 5 2 8 2C10 2 11.5 3 12.5 4L14 2.5V7.5H9L10.8 5.7C10 5 9 4.5 8 4.5C6.5 4.5 5 5.5 4.7 7Z" fill="#4f82c0"/><path d="M14 9C13.5 12 11 14 8 14C6 14 4.5 13 3.5 12L2 13.5V8.5H7L5.2 10.3C6 11 7 11.5 8 11.5C9.5 11.5 11 10.5 11.3 9Z" fill="#4f82c0"/></svg>
<svg style="left:58px;top:193px" width="17" height="17" viewBox="0 0 17 17"><path d="M1 1.5H16L10 8.5V16L7 14.5V8.5Z" fill="#5a88c3"/><rect x="1" y="1" width="15" height="2.5" fill="#f3d23a"/></svg>
<svg style="left:84px;top:193px" width="17" height="17" viewBox="0 0 17 17"><path d="M2 3H7V15H2Z" fill="none" stroke="#999" stroke-width="0.8"/><rect x="1" y="5" width="3" height="3" fill="#f39c32"/><rect x="1" y="11" width="3" height="3" fill="#f39c32"/><path d="M11 16V6H8.5L12.5 1L16.5 6H14V16Z" fill="#5a88c3"/></svg>
<svg style="left:109px;top:193px" width="17" height="17" viewBox="0 0 17 17"><circle cx="8" cy="8.5" r="7.3" fill="#5a88c3"/><text x="5.8" y="13" font-family="Liberation Serif" font-style="italic" font-weight="bold" font-size="11" fill="#fff">i</text></svg>
<div class="a" style="left:2px;top:291px;width:154px;height:18px;background:#e5e5e5"></div>
<svg style="left:50px;top:224px" width="5" height="9" viewBox="0 0 5 9"><path d="M0 0L4.5 4.5L0 9Z" fill="#555"/></svg>
<svg style="left:66px;top:222px" width="15" height="14" viewBox="0 0 15 14"><path d="M0.5 1.5V12.5H13.5V3.5H6.5L5 1.5Z" fill="#f2f2f2" stroke="#7a7a7a" stroke-width="1"/></svg>
<div class="tx" style="left:87px;top:222px;">pyqgis_in_a_day</div>
<svg style="left:50px;top:242px" width="5" height="9" viewBox="0 0 5 9"><path d="M0 0L4.5 4.5L0 9Z" fill="#555"/></svg>
<svg style="left:66px;top:240px" width="15" height="14" viewBox="0 0 15 14"><path d="M0.5 1.5V12.5H13.5V3.5H6.5L5 1.5Z" fill="#f2f2f2" stroke="#7a7a7a" stroke-width="1"/></svg>
<div class="tx" style="left:87px;top:240px;">python_foundation</div>
<svg style="left:48px;top:262px" width="9" height="5" viewBox="0 0 9 5"><path d="M0 0H9L4.5 4.5Z" fill="#555"/></svg>
<svg style="left:66px;top:258px" width="15" height="14" viewBox="0 0 15 14"><path d="M0.5 3V12.5H13.5V4.5H6.5L5 3Z" fill="#f2f2f2" stroke="#7a7a7a" stroke-width="1"/><path d="M0.5 1.5H6L7.5 3H13.5" fill="none" stroke="#7a7a7a" stroke-width="1.5"/></svg>
<div class="tx" style="left:87px;top:258px;">qgis2web</div>
<svg style="left:68px;top:280px" width="9" height="5" viewBox="0 0 9 5"><path d="M0 0H9L4.5 4.5Z" fill="#555"/></svg>
<svg style="left:85px;top:275px" width="16" height="15" viewBox="0 0 16 15"><rect x="1" y="0.5" width="13.5" height="13.5" fill="#f4f4f4" stroke="#777" stroke-width="0.9"/><path d="M6 0.5V14M9.5 0.5V14" stroke="#777" stroke-width="0.8"/><path d="M7.7 2V9" stroke="#777" stroke-width="1" stroke-dasharray="1 1"/><rect x="6.5" y="9" width="2.5" height="3" fill="#777"/></svg>
<div class="tx" style="left:107px;top:276px;">ne_10m_airports</div>
<svg style="left:105px;top:293px" width="17" height="13" viewBox="0 0 17 13"><path d="M1.8 4.5C1.5 2 3.5 0.8 5.5 1.5C7.5 2.3 9.5 1.2 12 1C14.5 0.8 16 2.5 15.6 5.5C15.3 7.5 16.3 9.8 14.5 10.8C12.5 11.5 10.5 9.2 7.5 10.2C4.5 11.2 2.5 13 1.6 10.5C1 8.5 2 6.5 1.8 4.5Z" fill="#6b98d0" stroke="#3a5a8a" stroke-width="0.9"/></svg>
<div class="tx" style="left:127px;top:295px;">ne_10m_airports</div>
<svg style="left:105px;top:311px" width="17" height="13" viewBox="0 0 17 13"><path d="M1.8 4.5C1.5 2 3.5 0.8 5.5 1.5C7.5 2.3 9.5 1.2 12 1C14.5 0.8 16 2.5 15.6 5.5C15.3 7.5 16.3 9.8 14.5 10.8C12.5 11.5 10.5 9.2 7.5 10.2C4.5 11.2 2.5 13 1.6 10.5C1 8.5 2 6.5 1.8 4.5Z" fill="#e3ecf6" stroke="#555" stroke-width="0.9"/></svg>
<div class="tx" style="left:127px;top:313px;">ne_10m_airports</div>
<svg style="left:107px;top:329px" width="14" height="14" viewBox="0 0 14 14"><rect x="0" y="0" width="13" height="13" fill="#a9c6ea"/><rect x="0" y="0" width="4" height="4" fill="#1a2a40"/><rect x="8" y="0" width="5" height="4" fill="#1a2a40"/><rect x="4" y="4" width="4" height="4" fill="#1a2a40"/><rect x="0" y="8" width="4" height="5" fill="#1a2a40"/><rect x="4" y="8" width="4" height="5" fill="#6a8ab8"/></svg>
<div class="tx" style="left:127px;top:331px;">ne_10m_airports</div>
<svg style="left:50px;top:350px" width="5" height="9" viewBox="0 0 5 9"><path d="M0 0L4.5 4.5L0 9Z" fill="#555"/></svg>
<svg style="left:66px;top:348px" width="15" height="14" viewBox="0 0 15 14"><path d="M0.5 1.5V12.5H13.5V3.5H6.5L5 1.5Z" fill="#f2f2f2" stroke="#7a7a7a" stroke-width="1"/></svg>
<div class="tx" style="left:87px;top:348px;">spatial_data_visualization</div>
<svg style="left:50px;top:368px" width="5" height="9" viewBox="0 0 5 9"><path d="M0 0L4.5 4.5L0 9Z" fill="#555"/></svg>
<svg style="left:66px;top:366px" width="15" height="14" viewBox="0 0 15 14"><path d="M0.5 1.5V12.5H13.5V3.5H6.5L5 1.5Z" fill="#f2f2f2" stroke="#7a7a7a" stroke-width="1"/></svg>
<div class="tx" style="left:87px;top:366px;">Telegram Desktop</div>
<div class="a" style="left:2px;top:375px;width:310px;height:15px;background:#e9e9e9;border-top:1px solid #d6d6d6"></div>
<div class="a" style="left:15px;top:376px;width:128px;height:13px;background:#fdfdfd;border:1px solid #d4d4d4"></div>
<svg style="left:5px;top:378px" width="6" height="9" viewBox="0 0 6 9"><path d="M5 0L0.5 4.5L5 9Z" fill="#606060"/></svg>

<!-- scrollbar -->


<!-- layers -->
<div class="tx" style="left:5px;top:399px;letter-spacing:-0.5px">Layers</div>
<div class="a" style="left:1px;top:446px;width:312px;height:185px;background:#fff;border-top:1px solid #cfcfcf;border-right:1px solid #a0a0a0;border-bottom:1px solid #a0a0a0"></div>
<div class="a" style="left:2px;top:447px;width:310px;height:18px;background:#0078d7"></div>
<svg style="left:9px;top:421px" width="17" height="17" viewBox="0 0 17 17"><path d="M1 9L8 6L11 13L5 15Z" fill="#e04040"/><path d="M3 7L9 4L12 10L6 13Z" fill="#f3d23a"/><path d="M2 8L6 5L9 11L5 14Z" fill="#5a88c3" opacity="0.7"/><path d="M5 9L10 6L13 12L9 15Z" fill="#c89a60"/><path d="M10 8L16 2" stroke="#d08a30" stroke-width="2.2" stroke-linecap="round"/></svg>
<svg style="left:34px;top:421px" width="17" height="18" viewBox="0 0 17 18"><rect x="1" y="5" width="9" height="10" fill="#f0f0f0" stroke="#666" stroke-width="0.8"/><rect x="4" y="3" width="9" height="10" fill="#f4f4f4" stroke="#666" stroke-width="0.8"/><path d="M7 1V9A1.5 1.5 0 0 0 10 9V3" fill="none" stroke="#4f7fbf" stroke-width="1"/><circle cx="13" cy="14" r="3.2" fill="#5aa85a"/><circle cx="13" cy="14" r="1.4" fill="#fff"/></svg>
<svg style="left:58px;top:422px" width="19" height="16" viewBox="0 0 19 16"><path d="M1 7C4 2.5 12 2.5 16 7C12 11.5 4 11.5 1 7Z" fill="#f4f4f4" stroke="#999" stroke-width="1"/><circle cx="8.5" cy="7" r="3.6" fill="#5a88c3"/><circle cx="8.5" cy="7" r="1.4" fill="#123"/><path d="M12 13H18L15 16Z" fill="#444"/></svg>
<svg style="left:84px;top:421px" width="17" height="17" viewBox="0 0 17 17"><path d="M1 1.5H16L10 8.5V16L7 14.5V8.5Z" fill="#5a88c3"/><rect x="1" y="1" width="15" height="2.5" fill="#f3d23a"/></svg>
<svg style="left:109px;top:420px" width="18" height="19" viewBox="0 0 18 19"><text x="-1" y="13" font-family="Liberation Serif" font-size="18" fill="#5b3a7a">ε</text><path d="M9 11H16L15 18H10Z" fill="#888"/><path d="M11 11V15M14 11V15" stroke="#ccc" stroke-width="0.8"/></svg>
<svg style="left:131px;top:428px" width="8" height="5" viewBox="0 0 8 5"><path d="M0 0H8L4 4.5Z" fill="#555"/></svg>
<svg style="left:145px;top:421px" width="10" height="17" viewBox="0 0 10 17"><path d="M4 2H9V15H4Z" fill="none" stroke="#999" stroke-width="0.8"/><rect x="2" y="4" width="3" height="3" fill="#f39c32"/><rect x="2" y="10" width="3" height="3" fill="#f39c32"/></svg>
<div class="a" style="left:64px;top:447px;width:248px;height:18px;background:#1684dc"></div>
<div class="a" style="left:25px;top:449px;width:14px;height:14px;background:#fff;border:1px solid #333"></div>
<svg style="left:27px;top:451px" width="10" height="10" viewBox="0 0 10 10"><path d="M1.2 5.3L3.8 8.5L8.8 1" fill="none" stroke="#000" stroke-width="1.8"/></svg>
<svg style="left:49px;top:452px" width="8" height="8" viewBox="0 0 8 8"><circle cx="4" cy="4" r="3" fill="#5f9a8a" stroke="#2f4f50" stroke-width="0.8"/></svg>
<div class="tx" style="left:67px;top:450px;color:#fff;font-weight:bold;letter-spacing:-0.25px"><span style="text-decoration:underline;text-decoration-thickness:1px;text-underline-offset:1.5px">ne_10m_airports</span></div>
<svg style="left:148px;top:391px" width="8" height="3" viewBox="0 0 8 3"><circle cx="1" cy="1" r="0.6" fill="#aaa"/><circle cx="5" cy="1" r="0.6" fill="#aaa"/></svg>

<!-- status bar -->
<div class="a" style="left:5px;top:634px;width:200px;height:22px;background:#fff;border:1px solid #bdbdbd;border-radius:3px;"></div>
<svg style="left:13px;top:637px" width="15" height="15" viewBox="0 0 15 15"><circle cx="6" cy="6" r="4.6" fill="none" stroke="#777" stroke-width="1.3"/><path d="M9.3 9.3L13.5 13.5" stroke="#777" stroke-width="1.6"/></svg>
<div class="tx" style="left:33px;top:640px;color:#777">Type to locate (Ctrl+K)</div>
<div class="tx" style="left:244px;top:639px;clip-path:inset(0 0 0 2px)">d</div>
<div class="a" style="left:254px;top:634px;width:79px;height:22px;background:#fff;border:1px solid #bdbdbd;border-radius:3px;"></div>
<div class="tx" style="left:263px;top:640px;">-182.7,25.3</div>
<svg style="left:336px;top:634px" width="18" height="20" viewBox="0 0 18 20"><ellipse cx="7" cy="9" rx="5.5" ry="7" fill="#555" transform="rotate(-25 7 9)"/><ellipse cx="7" cy="9" rx="3" ry="4.5" fill="#999" transform="rotate(-25 7 9)"/><circle cx="11.5" cy="14.5" r="3.5" fill="#fff" stroke="#444" stroke-width="1"/><path d="M13 2L16 5" stroke="#444" stroke-width="1"/></svg>
<div class="tx" style="left:364px;top:639px;clip-path:inset(0 0 0 2px)">a</div>
<div class="a" style="left:373px;top:634px;width:81px;height:22px;background:#fff;border:1px solid #bdbdbd;border-radius:3px;"></div>
<div class="tx" style="left:376px;top:640px;letter-spacing:-0.6px">230971072</div>
<div class="a" style="left:434px;top:635px;width:1px;height:20px;background:#d5d5d5"></div>
<svg style="left:439px;top:642px" width="9" height="5" viewBox="0 0 9 5"><path d="M0 0H9L4.5 4.5Z" fill="#555"/></svg>
<svg style="left:466px;top:637px" width="15" height="18" viewBox="0 0 15 18"><path d="M3.5 8.5V6A4 4 0 0 1 11.5 6V8.5" fill="none" stroke="#6a6a6a" stroke-width="1.8"/><rect x="1.5" y="8" width="12" height="9" rx="2" fill="#6a6a6a"/></svg>
<div class="tx" style="left:485px;top:639px;clip-path:inset(0 0 0 2px)">n</div>
<div class="a" style="left:494px;top:634px;width:87px;height:22px;background:#fff;border:1px solid #bdbdbd;border-radius:3px;"></div>
<div class="tx" style="left:499px;top:640px;">100%</div>
<div class="a" style="left:567px;top:635px;width:1px;height:20px;background:#d5d5d5"></div>
<svg style="left:571px;top:638px" width="8" height="15" viewBox="0 0 8 15"><path d="M0 5L4 0.5L8 5Z M0 9L4 13.5L8 9Z" fill="#555"/></svg>
<div class="tx" style="left:588px;top:639px;clip-path:inset(0 0 0 2px)">a</div>
<div class="a" style="left:604px;top:634px;width:83px;height:22px;background:#fff;border:1px solid #bdbdbd;border-radius:3px;"></div>
<div class="tx" style="left:608px;top:640px;">0.0 °</div>
<div class="a" style="left:674px;top:635px;width:1px;height:20px;background:#d5d5d5"></div>
<svg style="left:677px;top:638px" width="8" height="15" viewBox="0 0 8 15"><path d="M0 5L4 0.5L8 5Z M0 9L4 13.5L8 9Z" fill="#555"/></svg>
<div class="a" style="left:694px;top:638px;width:14px;height:14px;background:#fff;border:1px solid #333"></div>
<svg style="left:696px;top:640px" width="10" height="10" viewBox="0 0 10 10"><path d="M1.2 5.3L3.8 8.5L8.8 1" fill="none" stroke="#000" stroke-width="1.8"/></svg>
<div class="tx" style="left:712px;top:640px;letter-spacing:-0.6px">Render</div>
<svg style="left:765px;top:637px" width="16" height="16" viewBox="0 0 16 16"><circle cx="8" cy="8" r="6.8" fill="#eee" stroke="#777" stroke-width="1"/><path d="M1.5 8H14.5M8 1.2V14.8M3 4.5H13M3 11.5H13" stroke="#777" stroke-width="0.8"/><ellipse cx="8" cy="8" rx="3.5" ry="6.8" fill="none" stroke="#777" stroke-width="0.8"/></svg>
<div class="tx" style="left:784px;top:640px;letter-spacing:-1.1px">EPSG:4326</div>
<svg style="left:856px;top:636px" width="18" height="18" viewBox="0 0 18 18"><path d="M8.5 1C13 1 16.5 3.8 16.5 7.5C16.5 11.2 13 14 8.5 14C7.8 14 7.2 14 6.5 13.8L3 16.5V12.5C1.5 11.2 0.5 9.5 0.5 7.5C0.5 3.8 4 1 8.5 1Z" fill="#666"/><circle cx="5" cy="7.5" r="1.2" fill="#fff"/><circle cx="8.5" cy="7.5" r="1.2" fill="#fff"/><circle cx="12" cy="7.5" r="1.2" fill="#fff"/></svg>
<svg style="left:889px;top:646px" width="12" height="12" viewBox="0 0 12 12"><g fill="#b8b8b8"><circle cx="10" cy="2" r="0.7"/><circle cx="7" cy="5" r="0.7"/><circle cx="10" cy="5" r="0.7"/><circle cx="4" cy="8" r="0.7"/><circle cx="7" cy="8" r="0.7"/><circle cx="10" cy="8" r="0.7"/><circle cx="1" cy="11" r="0.7"/><circle cx="4" cy="11" r="0.7"/><circle cx="7" cy="11" r="0.7"/><circle cx="10" cy="11" r="0.7"/></g></svg>

<!-- window border -->
<div class="a" style="left:0;top:0;width:904px;height:660px;border:1px solid #1a6fb8;border-top:none;pointer-events:none"></div>

<!-- context menu -->
<div class="a" id="ctx" style="left:157px;top:79px;width:229px;height:378px;background:#fff;border:1px solid #a0a0a0;box-shadow:1px 1px 0 rgba(0,0,0,0.25),2px 2px 3px rgba(0,0,0,0.4)"></div>
<div class="a" style="left:157px;top:434px;width:229px;height:23px;background:#0078d7;border:1px solid #3b9ce8"></div>
<div class="mi" style="top:84px"><u>Z</u>oom to Layer</div>
<div class="mi" style="top:107px;color:#8c8c8c"><u>Z</u>oom to Selection</div>
<div class="mi" style="top:130px;letter-spacing:-0.15px"><u>S</u>how in Overview</div>
<div class="mi" style="top:153px;letter-spacing:-0.19px">Show Feature Count</div>
<div class="mi" style="top:176px;letter-spacing:-0.27px">Copy Layer</div>
<div class="mi" style="top:199px;letter-spacing:-0.41px">Re<u>n</u>ame Layer</div>
<div class="sep" style="top:218px"></div>
<div class="mi" style="top:224px;letter-spacing:-0.17px"><u>D</u>uplicate Layer</div>
<div class="mi" style="top:247px;letter-spacing:-0.24px"><u>R</u>emove Layer<span style="letter-spacing:-0.6px">...</span></div>
<div class="sep" style="top:266px"></div>
<div class="mi" style="top:272px"><u>O</u>pen Attribute Table</div>
<div class="mi" style="top:295px"><u>F</u>ilter<span style="letter-spacing:-0.6px">...</span></div>
<div class="mi" style="top:318px;letter-spacing:-0.23px">Change Data Source<span style="letter-spacing:-0.6px">...</span></div>
<div class="sep" style="top:336px"></div>
<div class="mi" style="top:343px;letter-spacing:-0.23px"><u>S</u>et Layer Scale Visibility<span style="letter-spacing:-0.6px">...</span></div>
<div class="mi" style="top:366px;letter-spacing:-0.74px">Layer CRS</div>
<div class="arr" style="top:369px"></div>
<div class="sep" style="top:384px"></div>
<div class="mi" style="top:391px">Export</div>
<div class="arr" style="top:394px"></div>
<div class="sep" style="top:409px"></div>
<div class="mi" style="top:416px;letter-spacing:-0.47px">Styles</div>
<div class="arr" style="top:419px"></div>
<div class="mi" style="top:439px;color:#fff"><u>P</u>roperties<span style="letter-spacing:-0.6px">...</span></div>
<!-- icons -->
<svg style="left:162px;top:82px" width="18" height="18" viewBox="0 0 18 18">
  <rect x="2.5" y="3.5" width="6" height="9" fill="#e2e2e2" stroke="#9a9a9a" stroke-width="0.8"/>
  <line x1="2" y1="16" x2="6.5" y2="11.5" stroke="#333" stroke-width="2.6" stroke-linecap="round"/>
  <line x1="2" y1="16" x2="6" y2="12" stroke="#f2c41a" stroke-width="1.3" stroke-linecap="round"/>
  <circle cx="11" cy="7" r="5.8" fill="rgba(238,238,238,0.85)" stroke="#666" stroke-width="1"/>
  <line x1="11" y1="1.8" x2="11" y2="12.2" stroke="#bbb" stroke-width="0.8"/>
</svg>
<svg style="left:162px;top:105px" width="18" height="18" viewBox="0 0 18 18" opacity="0.45">
  <rect x="2.5" y="3.5" width="6" height="9" fill="#e8e8e8" stroke="#bbb" stroke-width="0.8"/>
  <line x1="2" y1="16" x2="6.5" y2="11.5" stroke="#bbb" stroke-width="2.4" stroke-linecap="round"/>
  <circle cx="11" cy="7" r="5.8" fill="#f2f2f2" stroke="#aaa" stroke-width="1"/>
</svg>
<svg style="left:162px;top:129px" width="19" height="18" viewBox="0 0 19 18">
  <path d="M1 3.2C3 2.5 6 2.5 8 3.2C8.5 3.6 10 3.6 10.5 3.2C12.5 2.5 15.5 2.5 17.5 3.2" fill="none" stroke="#111" stroke-width="1.3"/>
  <path d="M1.8 3.5L2.5 6.5C3 7.5 6.5 7.5 7 6.5L7.7 3.5Z" fill="none" stroke="#111" stroke-width="1.5"/>
  <path d="M10.8 3.5L11.5 6.5C12 7.5 15.5 7.5 16 6.5L16.7 3.5Z" fill="none" stroke="#111" stroke-width="1.5"/>
  <rect x="11" y="10" width="6.5" height="6.5" rx="1.3" fill="#4f9a5a"/>
  <path d="M14.25 11.3v3.9M12.3 13.25h3.9" stroke="#fff" stroke-width="1.4"/>
</svg>
<div class="a" style="left:164px;top:153px;width:14px;height:14px;border:1px solid #8a8a8a;background:#fff"></div>
<svg style="left:163px;top:223px" width="17" height="16" viewBox="0 0 17 16">
  <rect x="1.5" y="3.5" width="11" height="11" fill="#d8d8d8" stroke="#666"/>
  <rect x="3.5" y="1.5" width="11" height="11" fill="#f0f0f0" stroke="#777"/>
  <rect x="10" y="9" width="5.5" height="5.5" fill="#f0d042" stroke="#b89a10" stroke-width="0.7"/>
</svg>
<svg style="left:163px;top:246px" width="17" height="16" viewBox="0 0 17 16">
  <rect x="1.5" y="1.5" width="12" height="12" fill="#f2f2f2" stroke="#777"/>
  <rect x="9" y="10" width="7" height="5" rx="1" fill="#e03b3b"/>
  <path d="M10.5 12.5h4" stroke="#fff" stroke-width="1.2"/>
</svg>
<svg style="left:163px;top:271px" width="17" height="16" viewBox="0 0 17 16">
  <rect x="1.5" y="1.5" width="14" height="13" fill="#dce8f6" stroke="#8fb0d8"/>
  <rect x="2" y="2" width="13" height="3" fill="#9fbde3"/>
  <path d="M3 7.5h3M8 7.5h6M3 10h3M8 10h6M3 12.5h3M8 12.5h6" stroke="#7d9fcf" stroke-width="1"/>
</svg>
<!-- cursor -->
<svg style="left:327px;top:441px" width="13" height="20" viewBox="0 0 13 20">
  <path d="M0.5 0.5 L0.5 16 L4 12.6 L6.6 18.6 L9 17.6 L6.5 11.8 L11.5 11.8 Z" fill="#fff" stroke="#000" stroke-width="1"/>
</svg>


</body></html>
